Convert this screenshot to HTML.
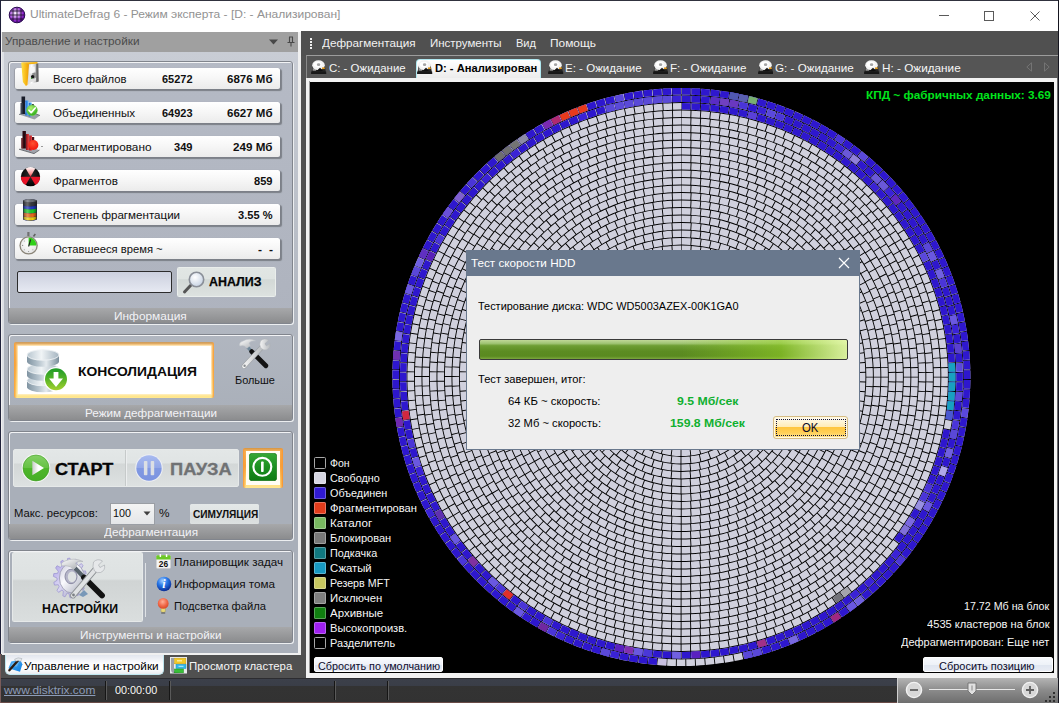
<!DOCTYPE html>
<html lang="ru"><head><meta charset="utf-8"><title>UltimateDefrag 6</title><style>
html,body{margin:0;padding:0;background:#000}
body{width:1059px;height:703px;overflow:hidden;font-family:"Liberation Sans", "DejaVu Sans", sans-serif}
#win{position:relative;width:1059px;height:703px;overflow:hidden;background:#505050}
.abs{position:absolute}
.t{position:absolute;white-space:nowrap;line-height:1;transform-origin:0 50%}
.grp{box-sizing:border-box;border:1px solid #81858d;border-radius:3px;box-shadow:inset 1px 1px 0 #f2f3f5, 1px 1px 0 #eceef0}
.gft{background:linear-gradient(#a7a8aa,#8b8c8e);border-radius:0 0 2px 2px}
.row{box-sizing:border-box;border-radius:2.5px;background:linear-gradient(#ffffff 0,#f7f7f7 45%,#ebebeb 100%);box-shadow:1.2px 1.5px 1px #7c8088, -0.8px 0 0.8px #9a9ea6}
</style></head><body>
<div id="win">
<div class="abs" style="left:0px;top:0px;width:1059px;height:32px;background:#fff"></div>
<div class="abs" style="left:0px;top:0px;width:1059px;height:1px;background:#30323e"></div>
<svg class="abs" style="left:8px;top:5.7px" width="18" height="18" viewBox="0 0 18 18"><defs><radialGradient id="gi" cx="42%" cy="40%" r="68%"><stop offset="0" stop-color="#ffffff"/><stop offset="0.35" stop-color="#c890e8"/><stop offset="0.7" stop-color="#8a20c8"/><stop offset="1" stop-color="#3a0a70"/></radialGradient></defs><circle cx="9" cy="9" r="7.8" fill="url(#gi)"/><g stroke="#1a0a28" stroke-width="0.9" fill="none" opacity="0.9"><path d="M1.5 9h15M2.8 5h12.4M2.8 13h12.4M9 1.5v15M5 2.8v12.4M13 2.8v12.4"/></g><circle cx="9" cy="9" r="7.8" fill="none" stroke="#2a0a50" stroke-width="1"/></svg>
<span class="t" style="left:30.1px;top:9.1px;font-size:11.8px;color:#929292;transform:scaleX(1.0177)">UltimateDefrag 6 - Режим эксперта - [D: - Анализирован]</span>
<div class="abs" style="left:939px;top:15px;width:10px;height:1px;background:#5a5a5a"></div>
<div class="abs" style="left:984px;top:11px;width:8px;height:8px;border:1px solid #5a5a5a"></div>
<svg class="abs" style="left:1029.5px;top:10.5px" width="10" height="10" viewBox="0 0 10 10"><path d="M0.5 0.5L9.5 9.5M9.5 0.5L0.5 9.5" stroke="#5a5a5a" stroke-width="1" fill="none"/></svg>
<div class="abs" style="left:0px;top:32px;width:310px;height:671px;background:#505050"></div>
<div class="abs" style="left:0px;top:0px;width:1px;height:703px;background:#20223a"></div>
<div class="abs" style="left:1px;top:32px;width:1px;height:622px;background:#f0f0f0"></div>
<div class="abs" style="left:2px;top:32px;width:296px;height:20px;background:#a0a0a0"></div>
<span class="t" style="left:4.5px;top:35.9px;font-size:10.9px;color:#4c4c4c;transform:scaleX(1.0826)">Управление и настройки</span>
<svg class="abs" style="left:268px;top:38px" width="12" height="8" viewBox="0 0 12 8"><path d="M1 1.5h9L5.5 6.5z" fill="#484848"/></svg>
<svg class="abs" style="left:286px;top:36px" width="10" height="11" viewBox="0 0 10 11"><path d="M3 1h4M3.5 1v5M6.5 1v5M1.5 6.5h7M5 6.5v4" stroke="#484848" stroke-width="1.1" fill="none"/></svg>
<div class="abs" style="left:2px;top:52px;width:296px;height:601px;background:linear-gradient(#c9cdd5 0,#a9afb9 368px,#a9afb9 100%)"></div>
<div class="abs" style="left:2px;top:52px;width:2px;height:601px;background:#dde0e5"></div>
<div class="abs" style="left:2px;top:653px;width:299px;height:1.5px;background:#f0f0f0"></div>
<div class="abs" style="left:298px;top:32px;width:3px;height:622px;background:#f0f0f0"></div>
<div class="abs" style="left:301px;top:32px;width:4px;height:645px;background:#525252"></div>
<div class="abs grp" style="left:8px;top:61px;width:285px;height:263px;background:linear-gradient(#b5bac5,#aeb3be)"></div>
<div class="abs gft" style="left:9px;top:308px;width:283px;height:15px"></div>
<span class="t" style="left:113.7px;top:310.9px;font-size:10.9px;color:#f2f2f6;transform:scaleX(1.0917)">Информация</span>
<div class="abs row" style="left:14.5px;top:68px;width:265.8px;height:21.3px"></div>
<span class="t" style="left:52.9px;top:73.9px;font-size:10.9px;color:#101010;transform:scaleX(1.0364)">Всего файлов</span>
<span class="t" style="left:161.5px;top:73.9px;font-size:10.9px;color:#101010;font-weight:700;transform:scaleX(1.0067)">65272</span>
<span class="t" style="left:226.5px;top:73.9px;font-size:10.9px;color:#101010;font-weight:700;transform:scaleX(1.0566)">6876 Мб</span>
<div class="abs row" style="left:14.5px;top:102px;width:265.8px;height:21.3px"></div>
<span class="t" style="left:52.9px;top:107.9px;font-size:10.9px;color:#101010;transform:scaleX(1.0691)">Объединенных</span>
<span class="t" style="left:161.5px;top:107.9px;font-size:10.9px;color:#101010;font-weight:700;transform:scaleX(1.0067)">64923</span>
<span class="t" style="left:226.5px;top:107.9px;font-size:10.9px;color:#101010;font-weight:700;transform:scaleX(1.0566)">6627 Мб</span>
<div class="abs row" style="left:14.5px;top:136px;width:265.8px;height:21.3px"></div>
<span class="t" style="left:52.5px;top:141.9px;font-size:10.9px;color:#101010;transform:scaleX(1.0835)">Фрагментировано</span>
<span class="t" style="left:173.5px;top:141.9px;font-size:10.9px;color:#101010;font-weight:700;transform:scaleX(1.0181)">349</span>
<span class="t" style="left:232.5px;top:141.9px;font-size:10.9px;color:#101010;font-weight:700;transform:scaleX(1.0676)">249 Мб</span>
<div class="abs row" style="left:14.5px;top:170px;width:265.8px;height:21.3px"></div>
<span class="t" style="left:52.5px;top:175.9px;font-size:10.9px;color:#101010;transform:scaleX(1.0719)">Фрагментов</span>
<span class="t" style="left:253.5px;top:175.9px;font-size:10.9px;color:#101010;font-weight:700;transform:scaleX(1.0181)">859</span>
<div class="abs row" style="left:14.5px;top:204px;width:265.8px;height:21.3px"></div>
<span class="t" style="left:52.9px;top:209.9px;font-size:10.9px;color:#101010;transform:scaleX(1.0646)">Степень фрагментации</span>
<span class="t" style="left:237.5px;top:209.9px;font-size:10.9px;color:#101010;font-weight:700;transform:scaleX(1.0175)">3.55 %</span>
<div class="abs row" style="left:14.5px;top:238px;width:265.8px;height:21.3px"></div>
<span class="t" style="left:52.9px;top:243.9px;font-size:10.9px;color:#101010;transform:scaleX(1.0290)">Оставшееся время ~</span>
<span class="t" style="left:257.8px;top:243.9px;font-size:10.9px;color:#101010;font-weight:700;word-spacing:3.2px;transform:scaleX(1.1050)">- -</span>
<svg class="abs" style="left:20px;top:61px" width="20" height="26" viewBox="0 0 20 26">
<defs><linearGradient id="fy" x1="0" y1="0" x2="1" y2="0"><stop offset="0" stop-color="#ffe24a"/><stop offset="0.6" stop-color="#f8b818"/><stop offset="1" stop-color="#e89808"/></linearGradient>
<linearGradient id="fp" x1="0" y1="0" x2="1" y2="0"><stop offset="0" stop-color="#d8d8d8"/><stop offset="0.35" stop-color="#ffffff"/><stop offset="0.7" stop-color="#c4c4c4"/><stop offset="0.82" stop-color="#5a5a5a"/><stop offset="1" stop-color="#8a8a8a"/></linearGradient></defs>
<path d="M1.2 1.5L17.4 1.1L17.6 2.8L9 3.4z" fill="#f4b414"/>
<path d="M8.2 3.4L18.4 2.4L18.9 20.4L7.9 23.6z" fill="url(#fp)"/>
<path d="M9.6 6.5L14.6 5.6L15 10.5L9.8 12z" fill="#f6f6f6"/>
<path d="M9.5 13L15.8 11.2L16 19.5L9.2 21.8z" fill="#e0e0e0"/>
<path d="M12 12.5L15.8 11.3L15.9 16.5L13.5 18z" fill="#8c8c8c"/>
<circle cx="12.6" cy="15.8" r="1.7" fill="#141414"/>
<circle cx="11.6" cy="17.3" r="0.7" fill="#38a028"/>
<path d="M1.2 1.5L9 3.2L7.5 24L5.9 25L2.9 21z" fill="url(#fy)"/>
</svg><svg class="abs" style="left:18px;top:95px" width="24" height="26" viewBox="0 0 24 26">
<defs><linearGradient id="cb" x1="0" y1="0" x2="1" y2="0"><stop offset="0" stop-color="#1060d0"/><stop offset="1" stop-color="#60b8f8"/></linearGradient>
<radialGradient id="cg" cx="40%" cy="30%" r="70%"><stop offset="0" stop-color="#b0f070"/><stop offset="1" stop-color="#2cae18"/></radialGradient></defs>
<path d="M1 19.5L13 17L22 20.5L16.5 24.5z" fill="#9aa0a8"/>
<path d="M1 19.5L13 17L22 20.5" fill="none" stroke="#606468" stroke-width="0.8"/>
<rect x="3.5" y="1.5" width="3.6" height="17.5" fill="#181c28"/>
<rect x="2.5" y="8" width="2" height="11" fill="#404858"/>
<rect x="7.3" y="5.5" width="3.2" height="15" fill="url(#cb)"/>
<rect x="10.7" y="7.5" width="3" height="14" fill="url(#cb)"/>
<rect x="13.8" y="9" width="2" height="6" fill="#282c38"/>
<circle cx="14" cy="15.3" r="5.4" fill="url(#cg)" stroke="#7ad050" stroke-width="0.5"/>
<path d="M11 15.2l2.2 2.4l4-4.6" fill="none" stroke="#fff" stroke-width="1.7" stroke-linecap="round" stroke-linejoin="round"/>
</svg><svg class="abs" style="left:18px;top:129px" width="26" height="26" viewBox="0 0 26 26">
<defs><linearGradient id="cr" x1="0" y1="0" x2="1" y2="0"><stop offset="0" stop-color="#901018"/><stop offset="1" stop-color="#f04848"/></linearGradient>
<radialGradient id="rr" cx="45%" cy="35%" r="70%"><stop offset="0" stop-color="#ff5030"/><stop offset="1" stop-color="#f01008"/></radialGradient></defs>
<path d="M1 20L12 18L21 21L16 24.5z" fill="#a0a4ac"/>
<path d="M1 20.2L16 24.6L21.5 21" fill="none" stroke="#505458" stroke-width="0.8"/>
<rect x="4.5" y="2" width="3.4" height="17.5" fill="#280810"/>
<rect x="3.2" y="9" width="2" height="10.5" fill="#68262c"/>
<rect x="8" y="5" width="3" height="16" fill="url(#cr)"/>
<rect x="11.2" y="6.5" width="2.8" height="15" fill="url(#cr)"/>
<rect x="14" y="8" width="2.2" height="5" fill="#481018"/>
<circle cx="15.3" cy="16" r="5.1" fill="url(#rr)"/>
<circle cx="24" cy="17.5" r="0.6" fill="#303030"/>
</svg><svg class="abs" style="left:20px;top:166px" width="21" height="21" viewBox="0 0 21 21">
<defs><linearGradient id="rt" x1="0" y1="0" x2="0" y2="1"><stop offset="0" stop-color="#ffffff"/><stop offset="0.7" stop-color="#ff9090"/><stop offset="1" stop-color="#f02030"/></linearGradient>
<radialGradient id="rk" cx="50%" cy="40%" r="60%"><stop offset="0" stop-color="#303030"/><stop offset="1" stop-color="#000"/></radialGradient></defs>
<circle cx="10.5" cy="10.7" r="9.6" fill="url(#rk)"/>
<path d="M10.5 10.7L15.30 2.39A9.6 9.6 0 0 0 5.70 2.39z" fill="url(#rt)"/>
<path d="M10.5 10.7L0.90 10.70A9.6 9.6 0 0 0 5.70 19.01z" fill="#e81428"/>
<path d="M10.5 10.7L15.30 19.01A9.6 9.6 0 0 0 20.10 10.70z" fill="#e81428"/>
</svg><svg class="abs" style="left:22px;top:198px" width="16" height="24" viewBox="0 0 16 24">
<defs><linearGradient id="bs" x1="0" y1="0" x2="1" y2="0"><stop offset="0" stop-color="#000" stop-opacity="0.45"/><stop offset="0.35" stop-color="#fff" stop-opacity="0.25"/><stop offset="0.7" stop-color="#000" stop-opacity="0"/><stop offset="1" stop-color="#000" stop-opacity="0.5"/></linearGradient></defs>
<path d="M1 2.5Q8 -0.5 15 2.5V21.5Q8 24.5 1 21.5z" fill="#1c2a80"/>
<path d="M1 2.5Q8 -0.5 15 2.5V7.5Q8 9.5 1 7.5z" fill="#34363c"/>
<ellipse cx="8" cy="2.6" rx="7" ry="1.7" fill="#6c7078"/>
<path d="M1.5 7.8Q8 9.8 14.5 7.8V10.5Q8 12 1.5 10.5z" fill="#2038c0"/>
<path d="M1.5 10.6Q8 12.4 14.5 10.6V14.6Q8 16.2 1.5 14.6z" fill="#18c828"/>
<path d="M1.5 14.8Q8 16.4 14.5 14.8V18.3Q8 20 1.5 18.3z" fill="#e86a18"/>
<path d="M1.5 18.5Q8 20.2 14.5 18.5V21.3Q8 23.8 1.5 21.3z" fill="#f0d010"/>
<path d="M1 2.5Q8 -0.5 15 2.5V21.5Q8 24.5 1 21.5z" fill="url(#bs)"/>
</svg><svg class="abs" style="left:18px;top:231px" width="22" height="25" viewBox="0 0 22 25">
<defs><radialGradient id="wf" cx="45%" cy="40%" r="60%"><stop offset="0" stop-color="#fff"/><stop offset="1" stop-color="#e6e6e6"/></radialGradient></defs>
<rect x="9.3" y="1" width="2.2" height="4" fill="#707070"/>
<path d="M15.5 5.5l1.8-2.5" stroke="#606060" stroke-width="1.6"/>
<circle cx="10.6" cy="14.4" r="9.2" fill="#8a8478"/>
<circle cx="10.6" cy="14.4" r="7.9" fill="url(#wf)"/>
<path d="M10.6 14.4V6.5A7.9 7.9 0 0 1 18.5 14.4z" fill="#30d018"/>
<path d="M10.6 15.5L12.6 8.5" stroke="#202020" stroke-width="1.1"/>
<g fill="#909090"><circle cx="10.6" cy="20.5" r="0.6"/><circle cx="4.6" cy="14.4" r="0.6"/><circle cx="6.3" cy="10" r="0.5"/><circle cx="6.3" cy="18.7" r="0.5"/><circle cx="14.9" cy="18.7" r="0.5"/></g>
</svg>
<div class="abs" style="left:17px;top:271px;width:155px;height:22px;box-sizing:border-box;border:1px solid #2c2c2c;border-radius:2px;background:linear-gradient(#ccd0de,#e6e9f2)"></div>
<div class="abs" style="left:176.7px;top:266.7px;width:99.6px;height:30.2px;box-sizing:border-box;border:1px solid #eaeeec;border-radius:1.5px;background:linear-gradient(#e1e6e4 0,#dfe4e2 38%,#d2d8d6 42%,#dde2e0 100%)"></div>
<span class="t" style="left:209.1px;top:275.1px;font-size:13px;color:#050505;font-weight:700;-webkit-text-stroke:0.25px #050505;transform:scaleX(0.9538)">АНАЛИЗ</span>
<svg class="abs" style="left:182px;top:269px" width="26" height="26" viewBox="0 0 26 26"><defs><radialGradient id="gl" cx="40%" cy="35%" r="65%"><stop offset="0" stop-color="#fff"/><stop offset="1" stop-color="#c8d4e4"/></radialGradient></defs><path d="M9.5 15.5L2.5 23" stroke="#555" stroke-width="3" stroke-linecap="round"/><circle cx="14.5" cy="10.5" r="7.2" fill="url(#gl)" stroke="#8a8f98" stroke-width="1.6"/></svg>
<div class="abs grp" style="left:8px;top:334px;width:285px;height:87px;background:transparent"></div>
<div class="abs gft" style="left:9px;top:405px;width:283px;height:15px"></div>
<span class="t" style="left:84.5px;top:407.9px;font-size:10.9px;color:#f2f2f6;transform:scaleX(1.0736)">Режим дефрагментации</span>
<div class="abs" style="left:14px;top:342px;width:200px;height:56px;border-radius:2px;background:linear-gradient(90deg,#f8a038 0,rgba(248,160,56,0) 3px,rgba(248,160,56,0) 197px,#f8a038 200px),linear-gradient(#c8985c 0,#f4b868 3px,#f8a840 22px,#ffd060 40px,#ffe890 56px)"></div>
<div class="abs" style="left:17.5px;top:345.5px;width:193px;height:48.5px;background:#fff;box-shadow:0 0 1.5px 1px #fff1cc"></div>
<span class="t" style="left:78.1px;top:364.7px;font-size:13.5px;color:#0a0a0a;font-weight:700;transform:scaleX(1.0268)">КОНСОЛИДАЦИЯ</span>
<svg class="abs" style="left:26px;top:347px" width="46" height="46" viewBox="0 0 46 46">
<defs><linearGradient id="dbs" x1="0" y1="0" x2="1" y2="0"><stop offset="0" stop-color="#8094a2"/><stop offset="0.35" stop-color="#b4c2cc"/><stop offset="0.6" stop-color="#e4eaee"/><stop offset="1" stop-color="#7a8e9c"/></linearGradient>
<linearGradient id="dbt" x1="0" y1="0" x2="1" y2="0"><stop offset="0" stop-color="#b8c6d0"/><stop offset="0.45" stop-color="#f0f4f6"/><stop offset="1" stop-color="#a4b4c0"/></linearGradient>
<linearGradient id="dbg" x1="0" y1="0" x2="0" y2="1"><stop offset="0" stop-color="#1c9a28"/><stop offset="0.5" stop-color="#58b428"/><stop offset="1" stop-color="#a4d030"/></linearGradient></defs>
<ellipse cx="17" cy="39.5" rx="16" ry="5" fill="#6c808e"/>
<path d="M1 33.5v6.5a16 5.2 0 0 0 32 0v-6.5z" fill="url(#dbs)"/><ellipse cx="17" cy="33.5" rx="16" ry="5.2" fill="url(#dbt)" stroke="#eef2f4" stroke-width="0.9"/><path d="M1 22v6.5a16 5.2 0 0 0 32 0v-6.5z" fill="url(#dbs)"/><ellipse cx="17" cy="22" rx="16" ry="5.2" fill="url(#dbt)" stroke="#eef2f4" stroke-width="0.9"/><path d="M1 8v6.5a16 5.2 0 0 0 32 0v-6.5z" fill="url(#dbs)"/><ellipse cx="17" cy="8" rx="16" ry="5.2" fill="url(#dbt)" stroke="#eef2f4" stroke-width="0.9"/>
<circle cx="30" cy="32.3" r="12.2" fill="#fff"/>
<circle cx="30" cy="32.3" r="11" fill="url(#dbg)"/>
<path d="M27.6 25h4.8v6.5h4.6L30 40L23 31.5h4.6z" fill="#fff"/>
</svg>
<svg class="abs" style="left:238px;top:337px" width="34" height="33" viewBox="0 0 36 33">
<defs><linearGradient id="tha" x1="0" y1="0" x2="1" y2="1"><stop offset="0" stop-color="#ffffff"/><stop offset="1" stop-color="#a8acb0"/></linearGradient>
<linearGradient id="twa" x1="0" y1="0" x2="1" y2="0"><stop offset="0" stop-color="#f4f4f4"/><stop offset="1" stop-color="#b4b8bc"/></linearGradient></defs>
<path d="M10 9.5L14.5 14.5" stroke="#6e8698" stroke-width="3.4"/>
<path d="M14.5 14.5L29.5 29.5" stroke="#141414" stroke-width="5" stroke-linecap="round"/>
<path d="M2 8.5Q0.5 5 5 3.5Q12 -0.5 18.5 3Q14 2.5 11.5 5.5L13 8L9.5 11L7 8.5Q4.5 7.5 2 8.5z" fill="url(#tha)" stroke="#c4c8cc" stroke-width="0.5"/>
<path d="M6.5 30L27 8" stroke="#9ea2a6" stroke-width="5.2" stroke-linecap="round"/>
<path d="M6.5 30L27 8" stroke="url(#twa)" stroke-width="4" stroke-linecap="round"/>
<path d="M24 3Q28 -0.5 32.5 2.5L28.5 6L30 8.5L34 6Q35 10.5 30.5 12.5Q27 13.5 24.5 11Q22 7 24 3z" fill="url(#twa)" stroke="#aeb2b6" stroke-width="0.5"/>
<circle cx="7" cy="29.5" r="1.3" fill="#8a8e92"/>
</svg>
<span class="t" style="left:235.2px;top:374.9px;font-size:10.9px;color:#101010;transform:scaleX(1.0026)">Больше</span>
<div class="abs grp" style="left:8px;top:431px;width:285px;height:109px;background:transparent"></div>
<div class="abs gft" style="left:9px;top:524px;width:283px;height:15px"></div>
<span class="t" style="left:103.5px;top:526.9px;font-size:10.9px;color:#f2f2f6;transform:scaleX(1.0781)">Дефрагментация</span>
<div class="abs" style="left:13px;top:449px;width:225.8px;height:38px;box-sizing:border-box;border:1px solid #e6e9e9;border-radius:2px;background:linear-gradient(#e3e7e7 0,#e0e4e4 36%,#d3d7d7 39%,#dde1e1 100%)"></div>
<div class="abs" style="left:125.5px;top:450px;width:1px;height:36px;background:#eceeef"></div>
<div class="abs" style="left:124.5px;top:450px;width:1px;height:36px;background:#c6caca"></div>
<svg class="abs" style="left:21.1px;top:453.1px" width="30" height="30" viewBox="0 0 30 30"><defs><linearGradient id="gs" x1="0" y1="0" x2="0" y2="1"><stop offset="0" stop-color="#84d066"/><stop offset="0.48" stop-color="#66c244"/><stop offset="0.52" stop-color="#4eb62a"/><stop offset="1" stop-color="#46ae26"/></linearGradient><linearGradient id="gt" x1="0" y1="0" x2="1" y2="0"><stop offset="0" stop-color="#c8ccc8"/><stop offset="0.5" stop-color="#ffffff"/><stop offset="1" stop-color="#ffffff"/></linearGradient></defs><circle cx="15" cy="15" r="14.3" fill="#f6f8f6"/><circle cx="15" cy="15" r="13" fill="url(#gs)" stroke="#3c9c20" stroke-width="0.6"/><path d="M11.3 7.8L23 15L11.3 22.2z" fill="url(#gt)"/></svg>
<span class="t" style="left:55.4px;top:460.5px;font-size:17.2px;color:#050505;font-weight:700;-webkit-text-stroke:0.35px #050505;transform:scaleX(1.0511)">СТАРТ</span>
<svg class="abs" style="left:133.9px;top:452.5px" width="30" height="30" viewBox="0 0 30 30"><defs><linearGradient id="gp" x1="0" y1="0" x2="0" y2="1"><stop offset="0" stop-color="#a8baf0"/><stop offset="0.48" stop-color="#94a8e8"/><stop offset="0.52" stop-color="#8098e2"/><stop offset="1" stop-color="#7c94e0"/></linearGradient></defs><circle cx="15" cy="15" r="13.8" fill="#eceef2"/><circle cx="15" cy="15" r="12.7" fill="url(#gp)"/><rect x="9.9" y="7.9" width="3.5" height="14.4" rx="0.8" fill="#dcdfe4"/><rect x="16.7" y="7.9" width="3.5" height="14.4" rx="0.8" fill="#dcdfe4"/></svg>
<span class="t" style="left:169.5px;top:460.5px;font-size:17.2px;color:#707274;font-weight:700;-webkit-text-stroke:0.3px #707274;transform:scaleX(1.0641)">ПАУЗА</span>
<div class="abs" style="left:243.2px;top:448.2px;width:39.5px;height:40px;border-radius:2px;background:linear-gradient(90deg,#f89a34 0,rgba(248,154,52,0) 3px,rgba(248,154,52,0) 36.5px,#f89a34 39.5px),linear-gradient(#d49444 0,#f6b45c 3px,#f8a43c 18px,#ffd470 30px,#ffe690 40px)"></div>
<div class="abs" style="left:246.4px;top:451px;width:33.4px;height:33.6px;background:#fffdf4"></div>
<svg class="abs" style="left:248.6px;top:453.4px" width="28" height="28" viewBox="0 0 30 30"><defs><linearGradient id="gw" x1="0" y1="0" x2="0" y2="1"><stop offset="0" stop-color="#36a836"/><stop offset="0.5" stop-color="#1c9020"/><stop offset="1" stop-color="#0e7a12"/></linearGradient></defs><rect x="0.3" y="0.3" width="29.4" height="29.4" rx="3" fill="url(#gw)" stroke="#0c6a10" stroke-width="0.6"/><circle cx="14.3" cy="14.8" r="9.6" fill="none" stroke="#fff" stroke-width="2.3"/><rect x="12.9" y="9" width="2.8" height="11.4" rx="0.8" fill="#fff"/></svg>
<span class="t" style="left:14.1px;top:507.9px;font-size:10.9px;color:#101010;transform:scaleX(1.0356)">Макс. ресурсов:</span>
<div class="abs" style="left:110px;top:503px;width:45px;height:22px;box-sizing:border-box;border:1px solid #9a9ea4;background:linear-gradient(#f4f4f4,#e4e6e8)"></div>
<span class="t" style="left:112.5px;top:507.9px;font-size:10.9px;color:#101010;transform:scaleX(0.9905)">100</span>
<svg class="abs" style="left:143px;top:511px" width="8" height="5" viewBox="0 0 8 5"><path d="M0.5 0.5h7L4 4.5z" fill="#404040"/></svg>
<span class="t" style="left:159.0px;top:507.9px;font-size:10.9px;color:#101010;transform:scaleX(1.0839)">%</span>
<div class="abs" style="left:189.8px;top:504px;width:69.3px;height:20px;border-radius:1.5px;background:linear-gradient(#e4e8e8 0,#e0e4e4 40%,#d4d8d8 44%,#dde1e1 100%)"></div>
<span class="t" style="left:192.8px;top:509.1px;font-size:10.6px;color:#101010;font-weight:700;transform:scaleX(0.9561)">СИМУЛЯЦИЯ</span>
<div class="abs grp" style="left:8px;top:550px;width:285px;height:93px;background:transparent"></div>
<div class="abs gft" style="left:9px;top:627px;width:283px;height:15px"></div>
<span class="t" style="left:79.5px;top:629.9px;font-size:10.9px;color:#f2f2f6;transform:scaleX(1.0753)">Инструменты и настройки</span>
<div class="abs" style="left:12.3px;top:552px;width:130.6px;height:70px;box-sizing:border-box;border:1px solid #e6e9e9;border-radius:1.5px;background:linear-gradient(#e1e5e5 0,#dee2e2 38%,#d0d4d4 41%,#dadede 100%)"></div>
<svg class="abs" style="left:52px;top:556px" width="56" height="44" viewBox="0 0 56 44">
<defs><linearGradient id="gg" x1="0" y1="0" x2="1" y2="1"><stop offset="0" stop-color="#a89ce4"/><stop offset="0.45" stop-color="#dcd8f4"/><stop offset="1" stop-color="#9a9eb0"/></linearGradient>
<linearGradient id="gb" x1="0" y1="0" x2="1" y2="1"><stop offset="0" stop-color="#c8c8d8"/><stop offset="0.4" stop-color="#fafafe"/><stop offset="1" stop-color="#a4a8b8"/></linearGradient>
<linearGradient id="gh" x1="0" y1="0" x2="1" y2="1"><stop offset="0" stop-color="#ffffff"/><stop offset="1" stop-color="#a0a4a8"/></linearGradient></defs>
<path d="M31.0 22.0L34.6 23.6L34.2 26.4L30.4 26.7L29.7 28.7L32.4 32.0L31.0 34.3L27.5 32.6L26.1 34.1L27.3 38.4L25.2 39.8L22.7 36.5L20.9 37.1L20.4 41.6L18.0 41.8L16.9 37.4L15.1 37.1L13.0 40.9L10.8 39.8L11.4 35.4L9.9 34.1L6.6 36.4L5.0 34.3L7.2 30.7L6.3 28.7L2.5 29.1L1.8 26.4L5.1 24.2L5.0 22.0L1.4 20.4L1.8 17.6L5.6 17.3L6.3 15.3L3.6 12.0L5.0 9.7L8.5 11.4L9.9 9.9L8.7 5.6L10.8 4.2L13.3 7.5L15.1 6.9L15.6 2.4L18.0 2.2L19.1 6.6L20.9 6.9L23.0 3.1L25.2 4.2L24.6 8.6L26.1 9.9L29.4 7.6L31.0 9.7L28.8 13.3L29.7 15.3L33.5 14.9L34.2 17.6L30.9 19.8z" fill="url(#gg)" stroke="#9890d0" stroke-width="0.7"/>
<ellipse cx="20" cy="22" rx="12.6" ry="15" fill="url(#gb)" stroke="#a0a0b8" stroke-width="0.9"/>
<ellipse cx="19" cy="20.5" rx="6" ry="7.2" fill="#b4b4c8" stroke="#8c8ca4" stroke-width="1"/>
<ellipse cx="20" cy="20.8" rx="4.2" ry="5.4" fill="#dfe2e3"/>
<path d="M32 34L36 38L31 41L27 39z" fill="#7898b8"/>
<path d="M23 12L32 21.5" stroke="#58636c" stroke-width="4"/>
<path d="M32 21.5L50 39.5" stroke="#121212" stroke-width="5.8" stroke-linecap="round"/>
<path d="M10 10Q8 7 13 5Q22 1 31 5.5Q26 4.5 23.5 7L25 10L21 13.5L18.5 10.8Q14 9 10 10z" fill="url(#gh)" stroke="#b0b4b8" stroke-width="0.6"/>
<path d="M21 39.5L44.5 12" stroke="#8e9296" stroke-width="5.8" stroke-linecap="round"/>
<path d="M21 39.5L44.5 12" stroke="#e0e2e4" stroke-width="4.2" stroke-linecap="round"/>
<path d="M41.5 6Q45.5 2 50.5 5L46.5 9L48 11.5L52.5 9Q53.5 14.5 48.5 16.5Q45 17.5 42.5 15Q40 10.5 41.5 6z" fill="#e6e8ea" stroke="#a4a8ac" stroke-width="0.6"/>
<circle cx="21.5" cy="39" r="1.4" fill="#7c8084"/>
</svg>
<span class="t" style="left:41.5px;top:602.9px;font-size:12px;color:#0a0a0a;font-weight:700;transform:scaleX(1.0230)">НАСТРОЙКИ</span>
<div class="abs" style="left:145px;top:563px;width:1px;height:54px;background:#dfe2e6"></div>
<span class="t" style="left:173.9px;top:556.9px;font-size:10.9px;color:#101010;transform:scaleX(1.0699)">Планировщик задач</span>
<span class="t" style="left:173.9px;top:578.9px;font-size:10.9px;color:#101010;transform:scaleX(1.0736)">Информация тома</span>
<span class="t" style="left:173.9px;top:600.9px;font-size:10.9px;color:#101010;transform:scaleX(1.0303)">Подсветка файла</span>
<svg class="abs" style="left:156px;top:554px" width="15" height="15" viewBox="0 0 15 15">
<rect x="0.3" y="1.2" width="14.4" height="13.2" rx="1.2" fill="#f4f4f4" stroke="#c4c4c4" stroke-width="0.6"/>
<path d="M0.3 2.4Q0.3 1.2 1.5 1.2H13.5Q14.7 1.2 14.7 2.4V5.6H0.3z" fill="#6cc828"/>
<rect x="3.6" y="0" width="1.5" height="3" rx="0.6" fill="#fff"/><rect x="9.8" y="0" width="1.5" height="3" rx="0.6" fill="#fff"/>
<text x="7.5" y="13" font-family="Liberation Sans, sans-serif" font-size="8.4" font-weight="700" text-anchor="middle" fill="#101010">26</text>
</svg><svg class="abs" style="left:156px;top:576px" width="16" height="16" viewBox="0 0 16 16">
<defs><radialGradient id="ib" cx="40%" cy="28%" r="75%"><stop offset="0" stop-color="#a8d0ff"/><stop offset="0.45" stop-color="#2878e8"/><stop offset="1" stop-color="#082890"/></radialGradient></defs>
<circle cx="8" cy="8" r="7.3" fill="url(#ib)"/>
<text x="8" y="12.3" font-family="Liberation Serif, serif" font-size="12" font-weight="700" font-style="italic" text-anchor="middle" fill="#fff">i</text>
</svg><svg class="abs" style="left:156px;top:597px" width="14" height="18" viewBox="0 0 14 18">
<defs><radialGradient id="bb" cx="45%" cy="35%" r="65%"><stop offset="0" stop-color="#ffb098"/><stop offset="0.6" stop-color="#f06848"/><stop offset="1" stop-color="#d84828"/></radialGradient></defs>
<path d="M5 10.5h4.4v4.2q-2.2 1.6-4.4 0z" fill="#e8d878" stroke="#a09860" stroke-width="0.5"/>
<circle cx="7.2" cy="6.4" r="5.4" fill="url(#bb)"/>
<path d="M5.2 16h4" stroke="#606060" stroke-width="1.2"/>
</svg>
<div class="abs" style="left:1px;top:654.5px;width:305px;height:23px;background:#505050"></div>
<div class="abs" style="left:4.5px;top:654.5px;width:159px;height:20.5px;box-sizing:border-box;border:1px solid #bfe6ee;border-top:none;border-radius:0 0 5px 5px;background:linear-gradient(#e2e6ee 0,#fdfdfe 45%,#ffffff 70%,#e8ecf0 100%)"></div>
<span class="t" style="left:24.1px;top:660.9px;font-size:10.9px;color:#000;transform:scaleX(1.0842)">Управление и настройки</span>
<span class="t" style="left:188.5px;top:660.9px;font-size:10.9px;color:#f6f6f6;transform:scaleX(1.0482)">Просмотр кластера</span>
<svg class="abs" style="left:8px;top:657px" width="15" height="15" viewBox="0 0 15 15">
<defs><linearGradient id="tb1" x1="0" y1="0" x2="1" y2="1"><stop offset="0" stop-color="#58b4f8"/><stop offset="1" stop-color="#0c7ce0"/></linearGradient></defs>
<path d="M0.4 11.2L3.2 4.6L12.2 2.6L14.4 7.2L12 14.8z" fill="url(#tb1)"/>
<path d="M4 6L11.5 4.2L9 9.5L3 9.5z" fill="#8cd0fc" opacity="0.55"/>
<path d="M1.4 13.3L10 3.4" stroke="#2c1c14" stroke-width="2.3" stroke-linecap="round"/>
<path d="M6.6 2.2Q10 -0.2 14 1.6L12.6 4.6Q10.5 3 7.8 4.2z" fill="#e4e8ec" stroke="#9098a0" stroke-width="0.4"/>
</svg><svg class="abs" style="left:170px;top:657px" width="17" height="17" viewBox="0 0 17 17">
<rect x="0" y="0" width="17" height="16.5" fill="#e8eaec"/>
<path d="M1 1h3v13l6 2H3Q1 15 1 13z" fill="#9aa0a8"/>
<rect x="4.5" y="1.2" width="11.3" height="5.6" fill="#f0c828" stroke="#c8a010" stroke-width="0.5"/>
<rect x="7" y="3.2" width="5" height="1.2" fill="#fff4b0"/>
<rect x="6" y="7.3" width="10" height="4.2" fill="#30b8e8" stroke="#1890c0" stroke-width="0.5"/>
<rect x="8.5" y="8.8" width="5" height="1" fill="#c0ecff"/>
<rect x="4.5" y="12" width="9" height="3.8" fill="#38c038" stroke="#189018" stroke-width="0.5"/>
</svg>
<div class="abs" style="left:301px;top:31px;width:758px;height:24.5px;background:#505050"></div>
<div class="abs" style="left:309.5px;top:38px;width:2.5px;height:2px;background:#f0f0f0;box-shadow:0 3px 0 #f0f0f0,0 6px 0 #f0f0f0,0 9px 0 #f0f0f0"></div>
<span class="t" style="left:321.6px;top:37.9px;font-size:10.9px;color:#f2f2f2;transform:scaleX(1.0735)">Дефрагментация</span>
<span class="t" style="left:429.5px;top:37.9px;font-size:10.9px;color:#f2f2f2;transform:scaleX(1.0542)">Инструменты</span>
<span class="t" style="left:515.5px;top:37.9px;font-size:10.9px;color:#f2f2f2;transform:scaleX(1.0151)">Вид</span>
<span class="t" style="left:549.5px;top:37.9px;font-size:10.9px;color:#f2f2f2;transform:scaleX(1.0932)">Помощь</span>
<div class="abs" style="left:305.5px;top:55px;width:753.5px;height:23px;background:#555555;border-top:1px solid #9c9c9c;border-left:1px solid #8a8a8a;box-sizing:border-box"></div>
<div class="abs" style="left:415.5px;top:58.5px;width:125.5px;height:19.5px;box-sizing:border-box;border:1px solid #b0e8f0;border-bottom:none;border-radius:4px 4px 0 0;background:linear-gradient(#ffffff,#ececec)"></div>
<span class="t" style="left:329.2px;top:62.9px;font-size:10.9px;color:#f6f6f6;transform:scaleX(1.0509)">C: - Ожидание</span>
<svg class="abs" style="left:311.4px;top:59.6px" width="15.4" height="14.2" viewBox="0 0 15.4 14.2"><path d="M0.2 13.9L1.4 7Q2 1.6 7.6 1.2Q13.2 1.6 14 7L15.2 13.9z" fill="#242424"/><rect x="1.6" y="8.3" width="3.4" height="2.4" fill="#9c9c9c"/><ellipse cx="7.5" cy="5.3" rx="6.3" ry="5" fill="#f4f4f4"/><ellipse cx="6.8" cy="4.6" rx="4" ry="2.8" fill="#ffffff"/><ellipse cx="7.6" cy="4.7" rx="1.7" ry="1.4" fill="#a4a4a4"/><path d="M5.5 11L9 7.8L12 10.5L10 11.3z" fill="#111"/><rect x="11" y="7.4" width="2.8" height="1.7" fill="#e09a20"/><rect x="0.2" y="11.6" width="15" height="2.4" fill="#181818"/></svg>
<span class="t" style="left:434.5px;top:62.9px;font-size:10.9px;color:#000;font-weight:700;transform:scaleX(1.0241)">D: - Анализирован</span>
<svg class="abs" style="left:417.4px;top:59.6px" width="15.4" height="14.2" viewBox="0 0 15.4 14.2"><path d="M0.2 13.9L1.4 7Q2 1.6 7.6 1.2Q13.2 1.6 14 7L15.2 13.9z" fill="#242424"/><rect x="1.6" y="8.3" width="3.4" height="2.4" fill="#9c9c9c"/><ellipse cx="7.5" cy="5.3" rx="6.3" ry="5" fill="#f4f4f4"/><ellipse cx="6.8" cy="4.6" rx="4" ry="2.8" fill="#ffffff"/><ellipse cx="7.6" cy="4.7" rx="1.7" ry="1.4" fill="#a4a4a4"/><path d="M5.5 11L9 7.8L12 10.5L10 11.3z" fill="#111"/><rect x="11" y="7.4" width="2.8" height="1.7" fill="#e09a20"/><rect x="0.2" y="11.6" width="15" height="2.4" fill="#181818"/></svg>
<span class="t" style="left:564.5px;top:62.9px;font-size:10.9px;color:#f6f6f6;transform:scaleX(1.0598)">E: - Ожидание</span>
<svg class="abs" style="left:548.1999999999999px;top:59.6px" width="15.4" height="14.2" viewBox="0 0 15.4 14.2"><path d="M0.2 13.9L1.4 7Q2 1.6 7.6 1.2Q13.2 1.6 14 7L15.2 13.9z" fill="#242424"/><rect x="1.6" y="8.3" width="3.4" height="2.4" fill="#9c9c9c"/><ellipse cx="7.5" cy="5.3" rx="6.3" ry="5" fill="#f4f4f4"/><ellipse cx="6.8" cy="4.6" rx="4" ry="2.8" fill="#ffffff"/><ellipse cx="7.6" cy="4.7" rx="1.7" ry="1.4" fill="#a4a4a4"/><path d="M5.5 11L9 7.8L12 10.5L10 11.3z" fill="#111"/><rect x="11" y="7.4" width="2.8" height="1.7" fill="#e09a20"/><rect x="0.2" y="11.6" width="15" height="2.4" fill="#181818"/></svg>
<span class="t" style="left:669.8px;top:62.9px;font-size:10.9px;color:#f6f6f6;transform:scaleX(1.0646)">F: - Ожидание</span>
<svg class="abs" style="left:652.5px;top:59.6px" width="15.4" height="14.2" viewBox="0 0 15.4 14.2"><path d="M0.2 13.9L1.4 7Q2 1.6 7.6 1.2Q13.2 1.6 14 7L15.2 13.9z" fill="#242424"/><rect x="1.6" y="8.3" width="3.4" height="2.4" fill="#9c9c9c"/><ellipse cx="7.5" cy="5.3" rx="6.3" ry="5" fill="#f4f4f4"/><ellipse cx="6.8" cy="4.6" rx="4" ry="2.8" fill="#ffffff"/><ellipse cx="7.6" cy="4.7" rx="1.7" ry="1.4" fill="#a4a4a4"/><path d="M5.5 11L9 7.8L12 10.5L10 11.3z" fill="#111"/><rect x="11" y="7.4" width="2.8" height="1.7" fill="#e09a20"/><rect x="0.2" y="11.6" width="15" height="2.4" fill="#181818"/></svg>
<span class="t" style="left:774.8px;top:62.9px;font-size:10.9px;color:#f6f6f6;transform:scaleX(1.0694)">G: - Ожидание</span>
<svg class="abs" style="left:757.9px;top:59.6px" width="15.4" height="14.2" viewBox="0 0 15.4 14.2"><path d="M0.2 13.9L1.4 7Q2 1.6 7.6 1.2Q13.2 1.6 14 7L15.2 13.9z" fill="#242424"/><rect x="1.6" y="8.3" width="3.4" height="2.4" fill="#9c9c9c"/><ellipse cx="7.5" cy="5.3" rx="6.3" ry="5" fill="#f4f4f4"/><ellipse cx="6.8" cy="4.6" rx="4" ry="2.8" fill="#ffffff"/><ellipse cx="7.6" cy="4.7" rx="1.7" ry="1.4" fill="#a4a4a4"/><path d="M5.5 11L9 7.8L12 10.5L10 11.3z" fill="#111"/><rect x="11" y="7.4" width="2.8" height="1.7" fill="#e09a20"/><rect x="0.2" y="11.6" width="15" height="2.4" fill="#181818"/></svg>
<span class="t" style="left:881.5px;top:62.9px;font-size:10.9px;color:#f6f6f6;transform:scaleX(1.0783)">H: - Ожидание</span>
<svg class="abs" style="left:864.4px;top:59.6px" width="15.4" height="14.2" viewBox="0 0 15.4 14.2"><path d="M0.2 13.9L1.4 7Q2 1.6 7.6 1.2Q13.2 1.6 14 7L15.2 13.9z" fill="#242424"/><rect x="1.6" y="8.3" width="3.4" height="2.4" fill="#9c9c9c"/><ellipse cx="7.5" cy="5.3" rx="6.3" ry="5" fill="#f4f4f4"/><ellipse cx="6.8" cy="4.6" rx="4" ry="2.8" fill="#ffffff"/><ellipse cx="7.6" cy="4.7" rx="1.7" ry="1.4" fill="#a4a4a4"/><path d="M5.5 11L9 7.8L12 10.5L10 11.3z" fill="#111"/><rect x="11" y="7.4" width="2.8" height="1.7" fill="#e09a20"/><rect x="0.2" y="11.6" width="15" height="2.4" fill="#181818"/></svg>
<svg class="abs" style="left:1024.5px;top:61.5px" width="26" height="10" viewBox="0 0 26 10"><path d="M6.5 0.8L1.8 5L6.5 9.2zM19.5 0.8L24.2 5L19.5 9.2z" fill="none" stroke="#747474" stroke-width="1"/></svg>
<div class="abs" style="left:306px;top:78px;width:753px;height:600px;background:#f2f2f2"></div>
<div class="abs" style="left:1056.5px;top:78px;width:1.2px;height:600px;background:#686868"></div>
<div class="abs" style="left:310px;top:81.5px;width:743.5px;height:591px;background:#000"></div>
<div class="abs" style="left:308.5px;top:81px;width:1.5px;height:592px;background:#9a9a9a"></div>
<svg width="1059" height="703" viewBox="0 0 1059 703" style="position:absolute;left:0;top:0" shape-rendering="geometricPrecision">
<circle cx="681.4" cy="377.0" r="285.70" fill="none" stroke="#d0d0dd" stroke-width="6.60" stroke-dasharray="8.699 0.900" stroke-dashoffset="-0.450" transform="rotate(-90 681.4 377.0)"/>
<circle cx="681.4" cy="377.0" r="278.20" fill="none" stroke="#d0d0dd" stroke-width="6.60" stroke-dasharray="8.704 0.900" stroke-dashoffset="-0.450" transform="rotate(-90 681.4 377.0)"/>
<circle cx="681.4" cy="377.0" r="270.70" fill="none" stroke="#d0d0dd" stroke-width="6.60" stroke-dasharray="8.655 0.900" stroke-dashoffset="-0.450" transform="rotate(-90 681.4 377.0)"/>
<circle cx="681.4" cy="377.0" r="263.20" fill="none" stroke="#d0d0dd" stroke-width="6.60" stroke-dasharray="8.715 0.900" stroke-dashoffset="-0.450" transform="rotate(-90 681.4 377.0)"/>
<circle cx="681.4" cy="377.0" r="255.70" fill="none" stroke="#d0d0dd" stroke-width="6.60" stroke-dasharray="8.663 0.900" stroke-dashoffset="-0.450" transform="rotate(-90 681.4 377.0)"/>
<circle cx="681.4" cy="377.0" r="248.20" fill="none" stroke="#d0d0dd" stroke-width="6.60" stroke-dasharray="8.726 0.900" stroke-dashoffset="-0.450" transform="rotate(-90 681.4 377.0)"/>
<circle cx="681.4" cy="377.0" r="240.70" fill="none" stroke="#d0d0dd" stroke-width="6.60" stroke-dasharray="8.672 0.900" stroke-dashoffset="-0.450" transform="rotate(-90 681.4 377.0)"/>
<circle cx="681.4" cy="377.0" r="233.20" fill="none" stroke="#d0d0dd" stroke-width="6.60" stroke-dasharray="8.740 0.900" stroke-dashoffset="-0.450" transform="rotate(-90 681.4 377.0)"/>
<circle cx="681.4" cy="377.0" r="225.70" fill="none" stroke="#d0d0dd" stroke-width="6.60" stroke-dasharray="8.682 0.900" stroke-dashoffset="-0.450" transform="rotate(-90 681.4 377.0)"/>
<circle cx="681.4" cy="377.0" r="218.20" fill="none" stroke="#d0d0dd" stroke-width="6.60" stroke-dasharray="8.755 0.900" stroke-dashoffset="-0.450" transform="rotate(-90 681.4 377.0)"/>
<circle cx="681.4" cy="377.0" r="210.70" fill="none" stroke="#d0d0dd" stroke-width="6.60" stroke-dasharray="8.693 0.900" stroke-dashoffset="-0.450" transform="rotate(-90 681.4 377.0)"/>
<circle cx="681.4" cy="377.0" r="203.20" fill="none" stroke="#d0d0dd" stroke-width="6.60" stroke-dasharray="8.772 0.900" stroke-dashoffset="-0.450" transform="rotate(-90 681.4 377.0)"/>
<circle cx="681.4" cy="377.0" r="195.70" fill="none" stroke="#d0d0dd" stroke-width="6.60" stroke-dasharray="8.706 0.900" stroke-dashoffset="-0.450" transform="rotate(-90 681.4 377.0)"/>
<circle cx="681.4" cy="377.0" r="188.20" fill="none" stroke="#d0d0dd" stroke-width="6.60" stroke-dasharray="8.636 0.900" stroke-dashoffset="-0.450" transform="rotate(-90 681.4 377.0)"/>
<circle cx="681.4" cy="377.0" r="180.70" fill="none" stroke="#d0d0dd" stroke-width="6.60" stroke-dasharray="8.722 0.900" stroke-dashoffset="-0.450" transform="rotate(-90 681.4 377.0)"/>
<circle cx="681.4" cy="377.0" r="173.20" fill="none" stroke="#d0d0dd" stroke-width="6.60" stroke-dasharray="8.646 0.900" stroke-dashoffset="-0.450" transform="rotate(-90 681.4 377.0)"/>
<circle cx="681.4" cy="377.0" r="165.70" fill="none" stroke="#d0d0dd" stroke-width="6.60" stroke-dasharray="8.740 0.900" stroke-dashoffset="-0.450" transform="rotate(-90 681.4 377.0)"/>
<circle cx="681.4" cy="377.0" r="158.20" fill="none" stroke="#d0d0dd" stroke-width="6.60" stroke-dasharray="8.658 0.900" stroke-dashoffset="-0.450" transform="rotate(-90 681.4 377.0)"/>
<circle cx="681.4" cy="377.0" r="150.70" fill="none" stroke="#d0d0dd" stroke-width="6.60" stroke-dasharray="8.762 0.900" stroke-dashoffset="-0.450" transform="rotate(-90 681.4 377.0)"/>
<circle cx="681.4" cy="377.0" r="143.20" fill="none" stroke="#d0d0dd" stroke-width="6.60" stroke-dasharray="8.672 0.900" stroke-dashoffset="-0.450" transform="rotate(-90 681.4 377.0)"/>
<circle cx="681.4" cy="377.0" r="135.70" fill="none" stroke="#d0d0dd" stroke-width="6.60" stroke-dasharray="8.789 0.900" stroke-dashoffset="-0.450" transform="rotate(-90 681.4 377.0)"/>
<circle cx="681.4" cy="377.0" r="128.20" fill="none" stroke="#d0d0dd" stroke-width="6.60" stroke-dasharray="8.689 0.900" stroke-dashoffset="-0.450" transform="rotate(-90 681.4 377.0)"/>
<circle cx="681.4" cy="377.0" r="120.70" fill="none" stroke="#d0d0dd" stroke-width="6.60" stroke-dasharray="8.823 0.900" stroke-dashoffset="-0.450" transform="rotate(-90 681.4 377.0)"/>
<circle cx="681.4" cy="377.0" r="113.20" fill="none" stroke="#d0d0dd" stroke-width="6.60" stroke-dasharray="8.712 0.900" stroke-dashoffset="-0.450" transform="rotate(-90 681.4 377.0)"/>
<circle cx="681.4" cy="377.0" r="105.70" fill="none" stroke="#d0d0dd" stroke-width="6.60" stroke-dasharray="8.588 0.900" stroke-dashoffset="-0.450" transform="rotate(-90 681.4 377.0)"/>
<circle cx="681.4" cy="377.0" r="98.20" fill="none" stroke="#d0d0dd" stroke-width="6.60" stroke-dasharray="8.741 0.900" stroke-dashoffset="-0.450" transform="rotate(-90 681.4 377.0)"/>
<circle cx="681.4" cy="377.0" r="90.70" fill="none" stroke="#d0d0dd" stroke-width="6.60" stroke-dasharray="8.598 0.900" stroke-dashoffset="-0.450" transform="rotate(-90 681.4 377.0)"/>
<circle cx="681.4" cy="377.0" r="83.20" fill="none" stroke="#d0d0dd" stroke-width="6.60" stroke-dasharray="8.781 0.900" stroke-dashoffset="-0.450" transform="rotate(-90 681.4 377.0)"/>
<circle cx="681.4" cy="377.0" r="75.70" fill="none" stroke="#d0d0dd" stroke-width="6.60" stroke-dasharray="8.613 0.900" stroke-dashoffset="-0.450" transform="rotate(-90 681.4 377.0)"/>
<circle cx="681.4" cy="377.0" r="68.20" fill="none" stroke="#d0d0dd" stroke-width="6.60" stroke-dasharray="8.839 0.900" stroke-dashoffset="-0.450" transform="rotate(-90 681.4 377.0)"/>
<circle cx="681.4" cy="377.0" r="60.70" fill="none" stroke="#d0d0dd" stroke-width="6.60" stroke-dasharray="8.635 0.900" stroke-dashoffset="-0.450" transform="rotate(-90 681.4 377.0)"/>
<circle cx="681.4" cy="377.0" r="53.20" fill="none" stroke="#d0d0dd" stroke-width="6.60" stroke-dasharray="8.931 0.900" stroke-dashoffset="-0.450" transform="rotate(-90 681.4 377.0)"/>
<circle cx="681.4" cy="377.0" r="45.70" fill="none" stroke="#d0d0dd" stroke-width="6.60" stroke-dasharray="8.671 0.900" stroke-dashoffset="-0.450" transform="rotate(-90 681.4 377.0)"/>
<circle cx="681.4" cy="377.0" r="38.20" fill="none" stroke="#d0d0dd" stroke-width="6.60" stroke-dasharray="8.331 0.900" stroke-dashoffset="-0.450" transform="rotate(-90 681.4 377.0)"/>
<circle cx="681.4" cy="377.0" r="30.70" fill="none" stroke="#d0d0dd" stroke-width="6.60" stroke-dasharray="8.745 0.900" stroke-dashoffset="-0.450" transform="rotate(-90 681.4 377.0)"/>
<circle cx="681.4" cy="377.0" r="23.20" fill="none" stroke="#d0d0dd" stroke-width="6.60" stroke-dasharray="8.211 0.900" stroke-dashoffset="-0.450" transform="rotate(-90 681.4 377.0)"/>
<circle cx="681.4" cy="377.0" r="15.70" fill="none" stroke="#d0d0dd" stroke-width="6.60" stroke-dasharray="8.965 0.900" stroke-dashoffset="-0.450" transform="rotate(-90 681.4 377.0)"/>
<circle cx="681.4" cy="377.0" r="8.20" fill="none" stroke="#d0d0dd" stroke-width="6.60" stroke-dasharray="7.687 0.900" stroke-dashoffset="-0.450" transform="rotate(-90 681.4 377.0)"/>
<path d="M681.9 88.0L690.7 88.1L690.4 94.7L681.8 94.6z" fill="#2e17ce"/>
<path d="M691.6 88.2L700.4 88.6L699.9 95.2L691.3 94.8z" fill="#2e17ce"/>
<path d="M701.3 88.7L710.0 89.4L709.4 96.0L700.8 95.3z" fill="#2e17ce"/>
<path d="M710.9 89.5L719.7 90.5L718.8 97.1L710.3 96.1z" fill="#2e17ce"/>
<path d="M720.6 90.7L729.3 92.0L728.2 98.5L719.7 97.2z" fill="#2e17ce"/>
<path d="M730.2 92.1L738.8 93.8L737.5 100.2L729.1 98.7z" fill="#2e17ce"/>
<path d="M739.7 93.9L748.3 95.9L746.8 102.3L738.4 100.4z" fill="#2e17ce"/>
<path d="M749.2 96.1L757.7 98.3L756.0 104.6L747.6 102.5z" fill="#2e17ce"/>
<path d="M758.6 98.5L767.0 101.0L765.1 107.3L756.8 104.9z" fill="#2e17ce"/>
<path d="M767.9 101.2L776.3 104.0L774.1 110.2L765.9 107.5z" fill="#2e17ce"/>
<path d="M777.1 104.3L785.4 107.4L783.0 113.5L774.9 110.5z" fill="#2e17ce"/>
<path d="M786.2 107.7L794.4 111.0L791.8 117.1L783.8 113.8z" fill="#2e17ce"/>
<path d="M795.2 111.4L803.2 114.9L800.5 120.9L792.6 117.4z" fill="#2e17ce"/>
<path d="M804.1 115.3L812.0 119.2L809.0 125.1L801.3 121.3z" fill="#2e17ce"/>
<path d="M812.8 119.6L820.6 123.7L817.4 129.5L809.8 125.5z" fill="#2e17ce"/>
<path d="M821.4 124.2L829.0 128.5L825.6 134.2L818.2 129.9z" fill="#2e17ce"/>
<path d="M829.8 129.0L837.3 133.6L833.7 139.2L826.4 134.7z" fill="#2e17ce"/>
<path d="M838.0 134.1L845.3 139.0L841.6 144.4L834.5 139.7z" fill="#4a35d8"/>
<path d="M846.1 139.5L853.3 144.6L849.3 150.0L842.3 144.9z" fill="#2e17ce"/>
<path d="M854.0 145.2L861.0 150.6L856.9 155.7L850.0 150.5z" fill="#2e17ce"/>
<path d="M861.7 151.1L868.5 156.7L864.2 161.7L857.6 156.3z" fill="#5a48dc"/>
<path d="M869.2 157.3L875.8 163.1L871.3 168.0L864.9 162.3z" fill="#2e17ce"/>
<path d="M876.4 163.7L882.8 169.8L878.2 174.5L872.0 168.6z" fill="#2e17ce"/>
<path d="M883.5 170.4L889.7 176.7L884.9 181.2L878.9 175.1z" fill="#2e17ce"/>
<path d="M890.3 177.3L896.3 183.8L891.4 188.2L885.5 181.9z" fill="#2e17ce"/>
<path d="M896.9 184.4L902.7 191.1L897.6 195.3L892.0 188.8z" fill="#2e17ce"/>
<path d="M903.3 191.8L908.8 198.6L903.6 202.7L898.2 196.0z" fill="#2e17ce"/>
<path d="M909.3 199.3L914.7 206.4L909.3 210.3L904.1 203.4z" fill="#2e17ce"/>
<path d="M915.2 207.1L920.3 214.3L914.8 218.0L909.8 211.0z" fill="#2e17ce"/>
<path d="M920.8 215.1L925.6 222.4L920.0 225.9L915.3 218.8z" fill="#2e17ce"/>
<path d="M926.1 223.2L930.6 230.7L924.9 234.0L920.5 226.7z" fill="#2e17ce"/>
<path d="M931.1 231.5L935.4 239.2L929.6 242.3L925.4 234.8z" fill="#2e17ce"/>
<path d="M935.8 240.0L939.9 247.8L934.0 250.7L930.0 243.1z" fill="#2e17ce"/>
<path d="M940.3 248.6L944.1 256.5L938.1 259.3L934.4 251.5z" fill="#2e17ce"/>
<path d="M944.5 257.4L948.0 265.4L941.9 268.0L938.5 260.1z" fill="#2e17ce"/>
<path d="M948.3 266.3L951.6 274.4L945.4 276.8L942.2 268.8z" fill="#2e17ce"/>
<path d="M951.9 275.3L954.9 283.6L948.6 285.7L945.7 277.6z" fill="#2e17ce"/>
<path d="M955.2 284.4L957.9 292.8L951.6 294.7L948.9 286.6z" fill="#2e17ce"/>
<path d="M958.1 293.7L960.5 302.2L954.2 303.9L951.8 295.6z" fill="#2e17ce"/>
<path d="M960.8 303.0L962.9 311.6L956.5 313.1L954.4 304.7z" fill="#2e17ce"/>
<path d="M963.1 312.5L964.9 321.1L958.5 322.3L956.7 313.9z" fill="#2e17ce"/>
<path d="M965.1 322.0L966.7 330.6L960.1 331.7L958.6 323.2z" fill="#2e17ce"/>
<path d="M966.8 331.5L968.1 340.2L961.5 341.1L960.3 332.6z" fill="#2e17ce"/>
<path d="M968.2 341.1L969.1 349.9L962.6 350.5L961.6 342.0z" fill="#2e17ce"/>
<path d="M969.2 350.8L969.9 359.6L963.3 360.0L962.6 351.4z" fill="#2e17ce"/>
<path d="M969.9 360.5L970.3 369.3L963.7 369.4L963.3 360.8z" fill="#2e17ce"/>
<path d="M970.3 370.2L970.4 379.0L963.8 378.9L963.7 370.3z" fill="#2e17ce"/>
<path d="M970.4 379.9L970.2 388.7L963.6 388.4L963.8 379.8z" fill="#2e17ce"/>
<path d="M970.1 389.6L969.6 398.4L963.0 397.9L963.5 389.3z" fill="#2e17ce"/>
<path d="M969.5 399.3L968.7 408.0L962.2 407.3L963.0 398.8z" fill="#2e17ce"/>
<path d="M968.6 408.9L967.5 417.7L961.0 416.7L962.1 408.2z" fill="#5a48dc"/>
<path d="M967.4 418.6L966.0 427.3L959.5 426.1L960.9 417.6z" fill="#2e17ce"/>
<path d="M965.8 428.2L964.1 436.8L957.7 435.4L959.3 427.0z" fill="#2e17ce"/>
<path d="M964.0 437.7L962.0 446.3L955.6 444.7L957.5 436.3z" fill="#2e17ce"/>
<path d="M961.8 447.1L959.5 455.7L953.1 453.9L955.4 445.5z" fill="#2e17ce"/>
<path d="M959.2 456.5L956.7 464.9L950.4 462.9L952.9 454.7z" fill="#2e17ce"/>
<path d="M956.4 465.8L953.6 474.1L947.4 471.9L950.1 463.8z" fill="#2e17ce"/>
<path d="M953.3 475.0L950.2 483.2L944.0 480.8L947.1 472.8z" fill="#2e17ce"/>
<path d="M949.8 484.1L946.4 492.2L940.4 489.6L943.7 481.6z" fill="#2e17ce"/>
<path d="M946.1 493.0L942.4 501.0L936.5 498.2L940.0 490.4z" fill="#2e17ce"/>
<path d="M942.0 501.9L938.1 509.7L932.2 506.7L936.1 499.0z" fill="#2e17ce"/>
<path d="M937.7 510.6L933.5 518.3L927.7 515.1L931.8 507.5z" fill="#2e17ce"/>
<path d="M933.1 519.1L928.6 526.7L923.0 523.3L927.3 515.8z" fill="#2e17ce"/>
<path d="M928.1 527.5L923.5 534.9L917.9 531.3L922.5 524.0z" fill="#2e17ce"/>
<path d="M923.0 535.7L918.0 542.9L912.6 539.2L917.4 532.0z" fill="#2e17ce"/>
<path d="M917.5 543.7L912.3 550.8L907.0 546.8L912.1 539.9z" fill="#2e17ce"/>
<path d="M911.8 551.5L906.3 558.5L901.2 554.3L906.5 547.5z" fill="#2e17ce"/>
<path d="M905.8 559.2L900.1 565.9L895.1 561.6L900.6 555.0z" fill="#4a35d8"/>
<path d="M899.5 566.6L893.6 573.2L888.8 568.7L894.5 562.3z" fill="#2e17ce"/>
<path d="M893.0 573.8L886.9 580.2L882.2 575.5L888.2 569.3z" fill="#2e17ce"/>
<path d="M886.3 580.8L880.0 587.0L875.5 582.2L881.6 576.2z" fill="#2e17ce"/>
<path d="M879.3 587.6L872.8 593.5L868.5 588.6L874.8 582.8z" fill="#2e17ce"/>
<path d="M872.1 594.1L865.4 599.8L861.2 594.7L867.8 589.2z" fill="#2e17ce"/>
<path d="M864.7 600.4L857.9 605.9L853.8 600.7L860.6 595.3z" fill="#6e5fe0"/>
<path d="M857.1 606.4L850.1 611.7L846.2 606.3L853.1 601.2z" fill="#2e17ce"/>
<path d="M849.3 612.2L842.1 617.2L838.4 611.7L845.5 606.8z" fill="#2e17ce"/>
<path d="M841.3 617.7L833.9 622.5L830.4 616.9L837.7 612.2z" fill="#2e17ce"/>
<path d="M833.2 623.0L825.6 627.5L822.3 621.7L829.7 617.3z" fill="#2e17ce"/>
<path d="M824.8 627.9L817.1 632.2L814.0 626.3L821.5 622.2z" fill="#2e17ce"/>
<path d="M816.3 632.6L808.4 636.6L805.5 630.6L813.2 626.8z" fill="#2e17ce"/>
<path d="M807.6 637.0L799.7 640.7L797.0 634.7L804.7 631.0z" fill="#2e17ce"/>
<path d="M798.8 641.1L790.7 644.5L788.2 638.4L796.1 635.0z" fill="#2e17ce"/>
<path d="M789.9 644.9L781.7 648.0L779.4 641.9L787.4 638.7z" fill="#2e17ce"/>
<path d="M780.8 648.4L772.5 651.3L770.4 645.0L778.6 642.2z" fill="#2e17ce"/>
<path d="M771.7 651.5L763.3 654.2L761.4 647.8L769.6 645.3z" fill="#2e17ce"/>
<path d="M762.4 654.4L753.9 656.8L752.2 650.4L760.5 648.1z" fill="#2e17ce"/>
<path d="M753.0 657.0L744.5 659.0L743.0 652.6L751.4 650.6z" fill="#2e17ce"/>
<path d="M656.7 664.9L647.9 664.1L648.7 657.5L657.3 658.4z" fill="#2e17ce"/>
<path d="M647.0 664.0L638.3 662.8L639.3 656.2L647.8 657.4z" fill="#2e17ce"/>
<path d="M637.4 662.6L628.7 661.2L629.9 654.7L638.4 656.1z" fill="#2e17ce"/>
<path d="M627.8 661.0L619.2 659.2L620.6 652.8L629.1 654.5z" fill="#2e17ce"/>
<path d="M618.3 659.0L609.8 657.0L611.4 650.6L619.8 652.6z" fill="#3a22d6"/>
<path d="M608.9 656.8L600.4 654.4L602.3 648.1L610.6 650.4z" fill="#2e17ce"/>
<path d="M599.5 654.2L591.1 651.5L593.2 645.3L601.4 647.8z" fill="#2e17ce"/>
<path d="M590.3 651.3L582.0 648.4L584.2 642.2L592.4 645.0z" fill="#2e17ce"/>
<path d="M581.1 648.0L572.9 644.9L575.4 638.7L583.4 641.9z" fill="#2e17ce"/>
<path d="M572.1 644.5L564.0 641.1L566.7 635.0L574.6 638.4z" fill="#2e17ce"/>
<path d="M563.1 640.7L555.2 637.0L558.1 631.0L565.8 634.7z" fill="#3a22d6"/>
<path d="M554.4 636.6L546.5 632.6L549.6 626.8L557.3 630.6z" fill="#4a35d8"/>
<path d="M545.7 632.2L538.0 627.9L541.3 622.2L548.8 626.3z" fill="#2e17ce"/>
<path d="M537.2 627.5L529.6 623.0L533.1 617.3L540.5 621.7z" fill="#2e17ce"/>
<path d="M528.9 622.5L521.5 617.7L525.1 612.2L532.4 616.9z" fill="#2e17ce"/>
<path d="M520.7 617.2L513.5 612.2L517.3 606.8L524.4 611.7z" fill="#2e17ce"/>
<path d="M512.7 611.7L505.7 606.4L509.7 601.2L516.6 606.3z" fill="#2e17ce"/>
<path d="M504.9 605.9L498.1 600.4L502.2 595.3L509.0 600.7z" fill="#2e17ce"/>
<path d="M497.4 599.8L490.7 594.1L495.0 589.2L501.6 594.7z" fill="#2e17ce"/>
<path d="M490.0 593.5L483.5 587.6L488.0 582.8L494.3 588.6z" fill="#2e17ce"/>
<path d="M482.8 587.0L476.5 580.8L481.2 576.2L487.3 582.2z" fill="#2e17ce"/>
<path d="M475.9 580.2L469.8 573.8L474.6 569.3L480.6 575.5z" fill="#2e17ce"/>
<path d="M469.2 573.2L463.3 566.6L468.3 562.3L474.0 568.7z" fill="#2e17ce"/>
<path d="M462.7 565.9L457.0 559.2L462.2 555.0L467.7 561.6z" fill="#4a35d8"/>
<path d="M456.5 558.5L451.0 551.5L456.3 547.5L461.6 554.3z" fill="#2e17ce"/>
<path d="M450.5 550.8L445.3 543.7L450.7 539.9L455.8 546.8z" fill="#2e17ce"/>
<path d="M444.8 542.9L439.8 535.7L445.4 532.0L450.2 539.2z" fill="#2e17ce"/>
<path d="M439.3 534.9L434.7 527.5L440.3 524.0L444.9 531.3z" fill="#2e17ce"/>
<path d="M434.2 526.7L429.7 519.1L435.5 515.8L439.8 523.3z" fill="#2e17ce"/>
<path d="M429.3 518.3L425.1 510.6L431.0 507.5L435.1 515.1z" fill="#3a22d6"/>
<path d="M424.7 509.7L420.8 501.9L426.7 499.0L430.6 506.7z" fill="#2e17ce"/>
<path d="M420.4 501.0L416.7 493.0L422.8 490.4L426.3 498.2z" fill="#2e17ce"/>
<path d="M416.4 492.2L413.0 484.1L419.1 481.6L422.4 489.6z" fill="#2e17ce"/>
<path d="M412.6 483.2L409.5 475.0L415.7 472.8L418.8 480.8z" fill="#2e17ce"/>
<path d="M409.2 474.1L406.4 465.8L412.7 463.8L415.4 471.9z" fill="#2e17ce"/>
<path d="M406.1 464.9L403.6 456.5L409.9 454.7L412.4 462.9z" fill="#2e17ce"/>
<path d="M403.3 455.7L401.0 447.1L407.4 445.5L409.7 453.9z" fill="#2e17ce"/>
<path d="M400.8 446.3L398.8 437.7L405.3 436.3L407.2 444.7z" fill="#2e17ce"/>
<path d="M398.7 436.8L397.0 428.2L403.5 427.0L405.1 435.4z" fill="#2e17ce"/>
<path d="M396.8 427.3L395.4 418.6L401.9 417.6L403.3 426.1z" fill="#2e17ce"/>
<path d="M395.3 417.7L394.2 408.9L400.7 408.2L401.8 416.7z" fill="#2e17ce"/>
<path d="M394.1 408.0L393.3 399.3L399.8 398.8L400.6 407.3z" fill="#2e17ce"/>
<path d="M393.2 398.4L392.7 389.6L399.3 389.3L399.8 397.9z" fill="#2e17ce"/>
<path d="M392.6 388.7L392.4 379.9L399.0 379.8L399.2 388.4z" fill="#2e17ce"/>
<path d="M392.4 379.0L392.5 370.2L399.1 370.3L399.0 378.9z" fill="#2e17ce"/>
<path d="M392.5 369.3L392.9 360.5L399.5 360.8L399.1 369.4z" fill="#2e17ce"/>
<path d="M392.9 359.6L393.6 350.8L400.2 351.4L399.5 360.0z" fill="#2e17ce"/>
<path d="M393.7 349.9L394.6 341.1L401.2 342.0L400.2 350.5z" fill="#2e17ce"/>
<path d="M394.7 340.2L396.0 331.5L402.5 332.6L401.3 341.1z" fill="#2e17ce"/>
<path d="M396.1 330.6L397.7 322.0L404.2 323.2L402.7 331.7z" fill="#2e17ce"/>
<path d="M397.9 321.1L399.7 312.5L406.1 313.9L404.3 322.3z" fill="#2e17ce"/>
<path d="M399.9 311.6L402.0 303.0L408.4 304.7L406.3 313.1z" fill="#2e17ce"/>
<path d="M402.3 302.2L404.7 293.7L411.0 295.6L408.6 303.9z" fill="#2e17ce"/>
<path d="M404.9 292.8L407.6 284.4L413.9 286.6L411.2 294.7z" fill="#2e17ce"/>
<path d="M407.9 283.6L410.9 275.3L417.1 277.6L414.2 285.7z" fill="#2e17ce"/>
<path d="M411.2 274.4L414.5 266.3L420.6 268.8L417.4 276.8z" fill="#2e17ce"/>
<path d="M414.8 265.4L418.3 257.4L424.3 260.1L420.9 268.0z" fill="#6e5fe0"/>
<path d="M418.7 256.5L422.5 248.6L428.4 251.5L424.7 259.3z" fill="#2e17ce"/>
<path d="M422.9 247.8L427.0 240.0L432.8 243.1L428.8 250.7z" fill="#2e17ce"/>
<path d="M427.4 239.2L431.7 231.5L437.4 234.8L433.2 242.3z" fill="#2e17ce"/>
<path d="M432.2 230.7L436.7 223.2L442.3 226.7L437.9 234.0z" fill="#2e17ce"/>
<path d="M437.2 222.4L442.0 215.1L447.5 218.8L442.8 225.9z" fill="#2e17ce"/>
<path d="M442.5 214.3L447.6 207.1L453.0 211.0L448.0 218.0z" fill="#2e17ce"/>
<path d="M448.1 206.4L453.5 199.3L458.7 203.4L453.5 210.3z" fill="#2e17ce"/>
<path d="M454.0 198.6L459.5 191.8L464.6 196.0L459.2 202.7z" fill="#2e17ce"/>
<path d="M460.1 191.1L465.9 184.4L470.8 188.8L465.2 195.3z" fill="#2e17ce"/>
<path d="M466.5 183.8L472.5 177.3L477.3 181.9L471.4 188.2z" fill="#4a35d8"/>
<path d="M473.1 176.7L479.3 170.4L483.9 175.1L477.9 181.2z" fill="#2e17ce"/>
<path d="M480.0 169.8L486.4 163.7L490.8 168.6L484.6 174.5z" fill="#2e17ce"/>
<path d="M487.0 163.1L493.6 157.3L497.9 162.3L491.5 168.0z" fill="#2e17ce"/>
<path d="M494.3 156.7L501.1 151.1L505.2 156.3L498.6 161.7z" fill="#2e17ce"/>
<path d="M501.8 150.6L508.8 145.2L512.8 150.5L505.9 155.7z" fill="#2e17ce"/>
<path d="M509.5 144.6L516.7 139.5L520.5 144.9L513.5 150.0z" fill="#5a48dc"/>
<path d="M517.5 139.0L524.8 134.1L528.3 139.7L521.2 144.4z" fill="#2e17ce"/>
<path d="M525.5 133.6L533.0 129.0L536.4 134.7L529.1 139.2z" fill="#2e17ce"/>
<path d="M533.8 128.5L541.4 124.2L544.6 129.9L537.2 134.2z" fill="#2e17ce"/>
<path d="M542.2 123.7L550.0 119.6L553.0 125.5L545.4 129.5z" fill="#2e17ce"/>
<path d="M550.8 119.2L558.7 115.3L561.5 121.3L553.8 125.1z" fill="#2e17ce"/>
<path d="M559.6 114.9L567.6 111.4L570.2 117.4L562.3 120.9z" fill="#2e17ce"/>
<path d="M568.4 111.0L576.6 107.7L579.0 113.8L571.0 117.1z" fill="#2e17ce"/>
<path d="M577.4 107.4L585.7 104.3L587.9 110.5L579.8 113.5z" fill="#2e17ce"/>
<path d="M586.5 104.0L594.9 101.2L596.9 107.5L588.7 110.2z" fill="#2e17ce"/>
<path d="M595.8 101.0L604.2 98.5L606.0 104.9L597.7 107.3z" fill="#2e17ce"/>
<path d="M605.1 98.3L613.6 96.1L615.2 102.5L606.8 104.6z" fill="#2e17ce"/>
<path d="M614.5 95.9L623.1 93.9L624.4 100.4L616.0 102.3z" fill="#5a48dc"/>
<path d="M624.0 93.8L632.6 92.1L633.7 98.7L625.3 100.2z" fill="#2e17ce"/>
<path d="M633.5 92.0L642.2 90.7L643.1 97.2L634.6 98.5z" fill="#2e17ce"/>
<path d="M643.1 90.5L651.9 89.5L652.5 96.1L644.0 97.1z" fill="#2e17ce"/>
<path d="M652.8 89.4L661.5 88.7L662.0 95.3L653.4 96.0z" fill="#2e17ce"/>
<path d="M662.4 88.6L671.2 88.2L671.5 94.8L662.9 95.2z" fill="#2e17ce"/>
<path d="M672.1 88.1L680.9 88.0L681.0 94.6L672.4 94.7z" fill="#2e17ce"/>
<path d="M681.9 95.5L690.7 95.7L690.4 102.2L681.8 102.1z" fill="#2e17ce"/>
<path d="M691.6 95.7L700.4 96.1L699.9 102.7L691.3 102.3z" fill="#2e17ce"/>
<path d="M701.3 96.2L710.0 97.0L709.4 103.5L700.8 102.8z" fill="#2e17ce"/>
<path d="M711.0 97.1L719.7 98.1L718.8 104.7L710.3 103.6z" fill="#2e17ce"/>
<path d="M720.6 98.2L729.3 99.6L728.2 106.1L719.7 104.8z" fill="#2e17ce"/>
<path d="M730.2 99.8L738.8 101.4L737.5 107.9L729.1 106.3z" fill="#2e17ce"/>
<path d="M739.7 101.6L748.3 103.6L746.8 110.0L738.4 108.1z" fill="#4a35d8"/>
<path d="M749.2 103.8L757.7 106.0L755.9 112.4L747.6 110.2z" fill="#2e17ce"/>
<path d="M758.6 106.3L767.0 108.8L765.0 115.1L756.8 112.6z" fill="#3a22d6"/>
<path d="M767.9 109.1L776.2 112.0L774.0 118.2L765.9 115.4z" fill="#5a48dc"/>
<path d="M777.1 112.3L785.3 115.4L782.9 121.5L774.8 118.5z" fill="#4a35d8"/>
<path d="M786.2 115.7L794.3 119.1L791.6 125.2L783.7 121.9z" fill="#2e17ce"/>
<path d="M795.1 119.5L803.1 123.2L800.3 129.1L792.5 125.5z" fill="#2e17ce"/>
<path d="M803.9 123.6L811.8 127.5L808.8 133.4L801.1 129.5z" fill="#2e17ce"/>
<path d="M812.6 128.0L820.3 132.2L817.1 137.9L809.5 133.8z" fill="#2e17ce"/>
<path d="M821.1 132.6L828.7 137.1L825.3 142.7L817.9 138.4z" fill="#2e17ce"/>
<path d="M829.5 137.6L836.9 142.4L833.3 147.9L826.0 143.2z" fill="#2e17ce"/>
<path d="M837.7 142.9L844.9 147.9L841.1 153.2L834.0 148.3z" fill="#3a22d6"/>
<path d="M845.7 148.4L852.7 153.6L848.7 158.9L841.8 153.8z" fill="#2e17ce"/>
<path d="M853.4 154.2L860.3 159.7L856.1 164.8L849.4 159.4z" fill="#2e17ce"/>
<path d="M861.0 160.3L867.7 166.0L863.4 170.9L856.8 165.3z" fill="#2e17ce"/>
<path d="M868.4 166.6L874.9 172.5L870.4 177.3L864.0 171.5z" fill="#2e17ce"/>
<path d="M875.6 173.2L881.8 179.4L877.1 184.0L871.0 178.0z" fill="#2e17ce"/>
<path d="M882.5 180.0L888.5 186.4L883.7 190.9L877.8 184.6z" fill="#2e17ce"/>
<path d="M889.2 187.1L895.0 193.6L890.0 197.9L884.3 191.5z" fill="#3a22d6"/>
<path d="M895.6 194.3L901.2 201.1L896.0 205.3L890.6 198.6z" fill="#2e17ce"/>
<path d="M901.8 201.8L907.1 208.8L901.8 212.8L896.6 206.0z" fill="#2e17ce"/>
<path d="M907.7 209.6L912.8 216.7L907.4 220.5L902.4 213.5z" fill="#2e17ce"/>
<path d="M913.3 217.5L918.2 224.8L912.7 228.4L907.9 221.2z" fill="#2e17ce"/>
<path d="M918.7 225.6L923.3 233.1L917.6 236.4L913.1 229.1z" fill="#2e17ce"/>
<path d="M923.8 233.8L928.1 241.5L922.4 244.7L918.1 237.2z" fill="#2e17ce"/>
<path d="M928.6 242.3L932.7 250.1L926.8 253.1L922.8 245.5z" fill="#2e17ce"/>
<path d="M933.1 250.9L936.9 258.8L930.9 261.6L927.2 253.9z" fill="#4a35d8"/>
<path d="M937.3 259.7L940.8 267.7L934.7 270.3L931.3 262.4z" fill="#2e17ce"/>
<path d="M941.2 268.6L944.4 276.8L938.3 279.1L935.1 271.1z" fill="#2e17ce"/>
<path d="M944.8 277.6L947.7 285.9L941.5 288.0L938.6 279.9z" fill="#4a35d8"/>
<path d="M948.0 286.8L950.7 295.1L944.4 297.1L941.8 288.9z" fill="#2e17ce"/>
<path d="M951.0 296.0L953.4 304.5L947.0 306.2L944.7 297.9z" fill="#2e17ce"/>
<path d="M953.6 305.4L955.7 313.9L949.3 315.4L947.3 307.0z" fill="#2e17ce"/>
<path d="M955.9 314.8L957.8 323.4L951.3 324.7L949.5 316.3z" fill="#2e17ce"/>
<path d="M957.9 324.3L959.4 333.0L952.9 334.0L951.4 325.6z" fill="#3a22d6"/>
<path d="M959.6 333.9L960.8 342.6L954.2 343.4L953.1 334.9z" fill="#2e17ce"/>
<path d="M960.9 343.5L961.8 352.3L955.2 352.9L954.3 344.3z" fill="#2e17ce"/>
<path d="M961.9 353.2L962.5 362.0L955.9 362.3L955.3 353.7z" fill="#2e17ce"/>
<path d="M962.5 362.9L962.8 371.7L956.3 371.8L956.0 363.2z" fill="#5a48dc"/>
<path d="M962.9 372.6L962.9 381.4L956.3 381.3L956.3 372.7z" fill="#2e17ce"/>
<path d="M962.8 382.3L962.5 391.1L956.0 390.8L956.3 382.2z" fill="#2e17ce"/>
<path d="M962.5 392.0L961.9 400.8L955.3 400.3L955.9 391.7z" fill="#2e17ce"/>
<path d="M961.8 401.7L960.9 410.5L954.3 409.7L955.2 401.1z" fill="#2e17ce"/>
<path d="M960.8 411.4L959.6 420.1L953.1 419.1L954.2 410.6z" fill="#2e17ce"/>
<path d="M959.4 421.0L957.9 429.7L951.4 428.4L952.9 420.0z" fill="#4a35d8"/>
<path d="M957.8 430.6L955.9 439.2L949.5 437.7L951.3 429.3z" fill="#2e17ce"/>
<path d="M955.7 440.1L953.6 448.6L947.3 447.0L949.3 438.6z" fill="#2e17ce"/>
<path d="M953.4 449.5L951.0 458.0L944.7 456.1L947.0 447.8z" fill="#3a22d6"/>
<path d="M950.7 458.9L948.0 467.2L941.8 465.1L944.4 456.9z" fill="#2e17ce"/>
<path d="M947.7 468.1L944.8 476.4L938.6 474.1L941.5 466.0z" fill="#2e17ce"/>
<path d="M944.4 477.2L941.2 485.4L935.1 482.9L938.3 474.9z" fill="#2e17ce"/>
<path d="M940.8 486.3L937.3 494.3L931.3 491.6L934.7 483.7z" fill="#2e17ce"/>
<path d="M936.9 495.2L933.1 503.1L927.2 500.1L930.9 492.4z" fill="#2e17ce"/>
<path d="M932.7 503.9L928.6 511.7L922.8 508.5L926.8 500.9z" fill="#2e17ce"/>
<path d="M928.1 512.5L923.8 520.2L918.1 516.8L922.4 509.3z" fill="#2e17ce"/>
<path d="M923.3 520.9L918.7 528.4L913.1 524.9L917.6 517.6z" fill="#2e17ce"/>
<path d="M918.2 529.2L913.3 536.5L907.9 532.8L912.7 525.6z" fill="#2e17ce"/>
<path d="M912.8 537.3L907.7 544.4L902.4 540.5L907.4 533.5z" fill="#2e17ce"/>
<path d="M907.1 545.2L901.8 552.2L896.6 548.0L901.8 541.2z" fill="#2e17ce"/>
<path d="M901.2 552.9L895.6 559.7L890.6 555.4L896.0 548.7z" fill="#3a22d6"/>
<path d="M895.0 560.4L889.2 566.9L884.3 562.5L890.0 556.1z" fill="#2e17ce"/>
<path d="M888.5 567.6L882.5 574.0L877.8 569.4L883.7 563.1z" fill="#2e17ce"/>
<path d="M881.8 574.6L875.6 580.8L871.0 576.0L877.1 570.0z" fill="#2e17ce"/>
<path d="M874.9 581.5L868.4 587.4L864.0 582.5L870.4 576.7z" fill="#3a22d6"/>
<path d="M867.7 588.0L861.0 593.7L856.8 588.7L863.4 583.1z" fill="#2e17ce"/>
<path d="M860.3 594.3L853.4 599.8L849.4 594.6L856.1 589.2z" fill="#3a22d6"/>
<path d="M852.7 600.4L845.7 605.6L841.8 600.2L848.7 595.1z" fill="#2e17ce"/>
<path d="M844.9 606.1L837.7 611.1L834.0 605.7L841.1 600.8z" fill="#2e17ce"/>
<path d="M836.9 611.6L829.5 616.4L826.0 610.8L833.3 606.1z" fill="#2e17ce"/>
<path d="M828.7 616.9L821.1 621.4L817.9 615.6L825.3 611.3z" fill="#2e17ce"/>
<path d="M820.3 621.8L812.6 626.0L809.5 620.2L817.1 616.1z" fill="#2e17ce"/>
<path d="M811.8 626.5L803.9 630.4L801.1 624.5L808.8 620.6z" fill="#2e17ce"/>
<path d="M803.1 630.8L795.1 634.5L792.5 628.5L800.3 624.9z" fill="#2e17ce"/>
<path d="M794.3 634.9L786.2 638.3L783.7 632.1L791.6 628.8z" fill="#2e17ce"/>
<path d="M785.3 638.6L777.1 641.7L774.8 635.5L782.9 632.5z" fill="#2e17ce"/>
<path d="M776.2 642.0L767.9 644.9L765.9 638.6L774.0 635.8z" fill="#2e17ce"/>
<path d="M767.0 645.2L758.6 647.7L756.8 641.4L765.0 638.9z" fill="#2e17ce"/>
<path d="M757.7 648.0L749.2 650.2L747.6 643.8L755.9 641.6z" fill="#2e17ce"/>
<path d="M748.3 650.4L739.7 652.4L738.4 645.9L746.8 644.0z" fill="#2e17ce"/>
<path d="M738.8 652.6L730.2 654.2L729.1 647.7L737.5 646.1z" fill="#2e17ce"/>
<path d="M729.3 654.4L720.6 655.8L719.7 649.2L728.2 647.9z" fill="#2e17ce"/>
<path d="M719.7 655.9L711.0 656.9L710.3 650.4L718.8 649.3z" fill="#2e17ce"/>
<path d="M710.0 657.0L701.3 657.8L700.8 651.2L709.4 650.5z" fill="#2e17ce"/>
<path d="M700.4 657.9L691.6 658.3L691.3 651.7L699.9 651.3z" fill="#2e17ce"/>
<path d="M690.7 658.3L681.9 658.5L681.8 651.9L690.4 651.8z" fill="#2e17ce"/>
<path d="M680.9 658.5L672.1 658.3L672.4 651.8L681.0 651.9z" fill="#2e17ce"/>
<path d="M671.2 658.3L662.4 657.9L662.9 651.3L671.5 651.7z" fill="#2e17ce"/>
<path d="M661.5 657.8L652.8 657.0L653.4 650.5L662.0 651.2z" fill="#2e17ce"/>
<path d="M651.8 656.9L643.1 655.9L644.0 649.3L652.5 650.4z" fill="#2e17ce"/>
<path d="M642.2 655.8L633.5 654.4L634.6 647.9L643.1 649.2z" fill="#2e17ce"/>
<path d="M632.6 654.2L624.0 652.6L625.3 646.1L633.7 647.7z" fill="#3a22d6"/>
<path d="M623.1 652.4L614.5 650.4L616.0 644.0L624.4 645.9z" fill="#2e17ce"/>
<path d="M613.6 650.2L605.1 648.0L606.9 641.6L615.2 643.8z" fill="#2e17ce"/>
<path d="M604.2 647.7L595.8 645.2L597.8 638.9L606.0 641.4z" fill="#2e17ce"/>
<path d="M594.9 644.9L586.6 642.0L588.8 635.8L596.9 638.6z" fill="#2e17ce"/>
<path d="M585.7 641.7L577.5 638.6L579.9 632.5L588.0 635.5z" fill="#2e17ce"/>
<path d="M576.6 638.3L568.5 634.9L571.2 628.8L579.1 632.1z" fill="#2e17ce"/>
<path d="M567.7 634.5L559.7 630.8L562.5 624.9L570.3 628.5z" fill="#2e17ce"/>
<path d="M558.9 630.4L551.0 626.5L554.0 620.6L561.7 624.5z" fill="#2e17ce"/>
<path d="M550.2 626.0L542.5 621.8L545.7 616.1L553.3 620.2z" fill="#4a35d8"/>
<path d="M541.7 621.4L534.1 616.9L537.5 611.3L544.9 615.6z" fill="#2e17ce"/>
<path d="M533.3 616.4L525.9 611.6L529.5 606.1L536.8 610.8z" fill="#2e17ce"/>
<path d="M525.1 611.1L517.9 606.1L521.7 600.8L528.8 605.7z" fill="#4a35d8"/>
<path d="M517.1 605.6L510.1 600.4L514.1 595.1L521.0 600.2z" fill="#2e17ce"/>
<path d="M509.4 599.8L502.5 594.3L506.7 589.2L513.4 594.6z" fill="#2e17ce"/>
<path d="M501.8 593.7L495.1 588.0L499.4 583.1L506.0 588.7z" fill="#4a35d8"/>
<path d="M494.4 587.4L487.9 581.5L492.4 576.7L498.8 582.5z" fill="#2e17ce"/>
<path d="M487.2 580.8L481.0 574.6L485.7 570.0L491.8 576.0z" fill="#2e17ce"/>
<path d="M480.3 574.0L474.3 567.6L479.1 563.1L485.0 569.4z" fill="#2e17ce"/>
<path d="M473.6 566.9L467.8 560.4L472.8 556.1L478.5 562.5z" fill="#2e17ce"/>
<path d="M467.2 559.7L461.6 552.9L466.8 548.7L472.2 555.4z" fill="#2e17ce"/>
<path d="M461.0 552.2L455.7 545.2L461.0 541.2L466.2 548.0z" fill="#2e17ce"/>
<path d="M455.1 544.4L450.0 537.3L455.4 533.5L460.4 540.5z" fill="#2e17ce"/>
<path d="M449.5 536.5L444.6 529.2L450.1 525.6L454.9 532.8z" fill="#2e17ce"/>
<path d="M444.1 528.4L439.5 520.9L445.2 517.6L449.7 524.9z" fill="#2e17ce"/>
<path d="M439.0 520.2L434.7 512.5L440.4 509.3L444.7 516.8z" fill="#3a22d6"/>
<path d="M434.2 511.7L430.1 503.9L436.0 500.9L440.0 508.5z" fill="#2e17ce"/>
<path d="M429.7 503.1L425.9 495.2L431.9 492.4L435.6 500.1z" fill="#2e17ce"/>
<path d="M425.5 494.3L422.0 486.3L428.1 483.7L431.5 491.6z" fill="#2e17ce"/>
<path d="M421.6 485.4L418.4 477.2L424.5 474.9L427.7 482.9z" fill="#2e17ce"/>
<path d="M418.0 476.4L415.1 468.1L421.3 466.0L424.2 474.1z" fill="#3a22d6"/>
<path d="M414.8 467.2L412.1 458.9L418.4 456.9L421.0 465.1z" fill="#4a35d8"/>
<path d="M411.8 458.0L409.4 449.5L415.8 447.8L418.1 456.1z" fill="#2e17ce"/>
<path d="M409.2 448.6L407.1 440.1L413.5 438.6L415.5 447.0z" fill="#4a35d8"/>
<path d="M406.9 439.2L405.0 430.6L411.5 429.3L413.3 437.7z" fill="#2e17ce"/>
<path d="M404.9 429.7L403.4 421.0L409.9 420.0L411.4 428.4z" fill="#2e17ce"/>
<path d="M403.2 420.1L402.0 411.4L408.6 410.6L409.7 419.1z" fill="#5a48dc"/>
<path d="M401.9 410.5L401.0 401.7L407.6 401.1L408.5 409.7z" fill="#2e17ce"/>
<path d="M400.9 400.8L400.3 392.0L406.9 391.7L407.5 400.3z" fill="#2e17ce"/>
<path d="M400.3 391.1L400.0 382.3L406.5 382.2L406.8 390.8z" fill="#2e17ce"/>
<path d="M399.9 381.4L399.9 372.6L406.5 372.7L406.5 381.3z" fill="#2e17ce"/>
<path d="M400.0 371.7L400.3 362.9L406.8 363.2L406.5 371.8z" fill="#2e17ce"/>
<path d="M400.3 362.0L400.9 353.2L407.5 353.7L406.9 362.3z" fill="#2e17ce"/>
<path d="M401.0 352.3L401.9 343.5L408.5 344.3L407.6 352.9z" fill="#2e17ce"/>
<path d="M402.0 342.6L403.2 333.9L409.7 334.9L408.6 343.4z" fill="#2e17ce"/>
<path d="M403.4 333.0L404.9 324.3L411.4 325.6L409.9 334.0z" fill="#2e17ce"/>
<path d="M405.0 323.4L406.9 314.8L413.3 316.3L411.5 324.7z" fill="#2e17ce"/>
<path d="M407.1 313.9L409.2 305.4L415.5 307.0L413.5 315.4z" fill="#2e17ce"/>
<path d="M409.4 304.5L411.8 296.0L418.1 297.9L415.8 306.2z" fill="#2e17ce"/>
<path d="M412.1 295.1L414.8 286.8L421.0 288.9L418.4 297.1z" fill="#2e17ce"/>
<path d="M415.1 285.9L418.0 277.6L424.2 279.9L421.3 288.0z" fill="#2e17ce"/>
<path d="M418.4 276.8L421.6 268.6L427.7 271.1L424.5 279.1z" fill="#2e17ce"/>
<path d="M422.0 267.7L425.5 259.7L431.5 262.4L428.1 270.3z" fill="#2e17ce"/>
<path d="M425.9 258.8L429.7 250.9L435.6 253.9L431.9 261.6z" fill="#5a48dc"/>
<path d="M430.1 250.1L434.2 242.3L440.0 245.5L436.0 253.1z" fill="#2e17ce"/>
<path d="M434.7 241.5L439.0 233.8L444.7 237.2L440.4 244.7z" fill="#4a35d8"/>
<path d="M439.5 233.1L444.1 225.6L449.7 229.1L445.2 236.4z" fill="#2e17ce"/>
<path d="M444.6 224.8L449.5 217.5L454.9 221.2L450.1 228.4z" fill="#2e17ce"/>
<path d="M450.0 216.7L455.1 209.6L460.4 213.5L455.4 220.5z" fill="#2e17ce"/>
<path d="M455.7 208.8L461.0 201.8L466.2 206.0L461.0 212.8z" fill="#2e17ce"/>
<path d="M461.6 201.1L467.2 194.3L472.2 198.6L466.8 205.3z" fill="#2e17ce"/>
<path d="M467.8 193.6L473.6 187.1L478.5 191.5L472.8 197.9z" fill="#2e17ce"/>
<path d="M474.3 186.4L480.3 180.0L485.0 184.6L479.1 190.9z" fill="#2e17ce"/>
<path d="M481.0 179.4L487.2 173.2L491.8 178.0L485.7 184.0z" fill="#3a22d6"/>
<path d="M487.9 172.5L494.4 166.6L498.8 171.5L492.4 177.3z" fill="#2e17ce"/>
<path d="M495.1 166.0L501.8 160.3L506.0 165.3L499.4 170.9z" fill="#2e17ce"/>
<path d="M502.5 159.7L509.4 154.2L513.4 159.4L506.7 164.8z" fill="#2e17ce"/>
<path d="M510.1 153.6L517.1 148.4L521.0 153.8L514.1 158.9z" fill="#3a22d6"/>
<path d="M517.9 147.9L525.1 142.9L528.8 148.3L521.7 153.2z" fill="#2e17ce"/>
<path d="M525.9 142.4L533.3 137.6L536.8 143.2L529.5 147.9z" fill="#2e17ce"/>
<path d="M534.1 137.1L541.7 132.6L544.9 138.4L537.5 142.7z" fill="#2e17ce"/>
<path d="M542.5 132.2L550.2 128.0L553.3 133.8L545.7 137.9z" fill="#2e17ce"/>
<path d="M551.0 127.5L558.9 123.6L561.7 129.5L554.0 133.4z" fill="#2e17ce"/>
<path d="M559.7 123.2L567.7 119.5L570.3 125.5L562.5 129.1z" fill="#2e17ce"/>
<path d="M568.5 119.1L576.6 115.7L579.1 121.9L571.2 125.2z" fill="#2e17ce"/>
<path d="M577.5 115.4L585.7 112.3L588.0 118.5L579.9 121.5z" fill="#3a22d6"/>
<path d="M586.6 112.0L594.9 109.1L596.9 115.4L588.8 118.2z" fill="#2e17ce"/>
<path d="M595.8 108.8L604.2 106.3L606.0 112.6L597.8 115.1z" fill="#2e17ce"/>
<path d="M605.1 106.0L613.6 103.8L615.2 110.2L606.9 112.4z" fill="#2e17ce"/>
<path d="M614.5 103.6L623.1 101.6L624.4 108.1L616.0 110.0z" fill="#2e17ce"/>
<path d="M624.0 101.4L632.6 99.8L633.7 106.3L625.3 107.9z" fill="#2e17ce"/>
<path d="M633.5 99.6L642.2 98.2L643.1 104.8L634.6 106.1z" fill="#2e17ce"/>
<path d="M643.1 98.1L651.8 97.1L652.5 103.6L644.0 104.7z" fill="#2e17ce"/>
<path d="M652.8 97.0L661.5 96.2L662.0 102.8L653.4 103.5z" fill="#2e17ce"/>
<path d="M662.4 96.1L671.2 95.7L671.5 102.3L662.9 102.7z" fill="#2e17ce"/>
<path d="M672.1 95.7L680.9 95.5L681.0 102.1L672.4 102.2z" fill="#3a22d6"/>
<path d="M681.9 103.0L690.6 103.2L690.4 109.8L681.8 109.6z" fill="#2e17ce"/>
<path d="M691.5 103.2L700.3 103.7L699.8 110.2L691.3 109.8z" fill="#2e17ce"/>
<path d="M701.2 103.7L709.9 104.5L709.2 111.1L700.7 110.3z" fill="#2e17ce"/>
<path d="M710.8 104.6L719.5 105.7L718.6 112.2L710.1 111.1z" fill="#2e17ce"/>
<path d="M720.4 105.8L729.1 107.2L727.9 113.7L719.5 112.3z" fill="#2e17ce"/>
<path d="M730.0 107.3L738.6 109.0L737.2 115.5L728.8 113.8z" fill="#2e17ce"/>
<path d="M739.4 109.2L748.0 111.2L746.4 117.6L738.0 115.7z" fill="#2e17ce"/>
<path d="M748.9 111.4L757.3 113.7L755.5 120.1L747.2 117.8z" fill="#2e17ce"/>
<path d="M758.2 114.0L766.6 116.6L764.5 122.8L756.3 120.3z" fill="#2e17ce"/>
<path d="M767.4 116.9L775.7 119.7L773.4 125.9L765.4 123.1z" fill="#2e17ce"/>
<path d="M776.5 120.1L784.7 123.2L782.2 129.3L774.3 126.2z" fill="#2e17ce"/>
<path d="M785.6 123.6L793.6 127.0L790.9 133.1L783.0 129.7z" fill="#2e17ce"/>
<path d="M794.4 127.4L802.4 131.1L799.4 137.1L791.7 133.4z" fill="#2e17ce"/>
<path d="M803.2 131.5L811.0 135.6L807.8 141.4L800.2 137.5z" fill="#2e17ce"/>
<path d="M811.8 136.0L819.4 140.3L816.1 146.0L808.6 141.8z" fill="#2e17ce"/>
<path d="M820.2 140.7L827.7 145.3L824.1 150.9L816.8 146.4z" fill="#2e17ce"/>
<path d="M828.4 145.8L835.8 150.6L832.0 156.1L824.9 151.4z" fill="#2e17ce"/>
<path d="M836.5 151.1L843.6 156.2L839.7 161.5L832.8 156.6z" fill="#2e17ce"/>
<path d="M844.4 156.7L851.3 162.1L847.2 167.2L840.5 162.0z" fill="#2e17ce"/>
<path d="M852.1 162.6L858.8 168.2L854.5 173.2L847.9 167.8z" fill="#2e17ce"/>
<path d="M859.5 168.8L866.1 174.6L861.6 179.5L855.2 173.8z" fill="#2e17ce"/>
<path d="M866.7 175.2L873.1 181.2L868.5 185.9L862.3 180.1z" fill="#2e17ce"/>
<path d="M873.8 181.9L879.9 188.1L875.1 192.7L869.1 186.6z" fill="#3a22d6"/>
<path d="M880.5 188.8L886.4 195.2L881.5 199.6L875.7 193.3z" fill="#2e17ce"/>
<path d="M887.0 195.9L892.7 202.6L887.6 206.8L882.1 200.3z" fill="#2e17ce"/>
<path d="M893.3 203.3L898.7 210.2L893.5 214.2L888.2 207.5z" fill="#2e17ce"/>
<path d="M899.3 210.9L904.5 217.9L899.1 221.8L894.1 214.9z" fill="#2e17ce"/>
<path d="M905.0 218.7L910.0 225.9L904.5 229.5L899.6 222.5z" fill="#2e17ce"/>
<path d="M910.5 226.7L915.2 234.1L909.5 237.5L905.0 230.3z" fill="#2e17ce"/>
<path d="M915.6 234.8L920.1 242.4L914.3 245.6L910.0 238.3z" fill="#2e17ce"/>
<path d="M920.5 243.2L924.7 250.9L918.8 253.9L914.7 246.4z" fill="#2e17ce"/>
<path d="M925.1 251.7L929.0 259.6L923.0 262.4L919.2 254.7z" fill="#5a48dc"/>
<path d="M929.4 260.4L933.0 268.4L926.9 271.0L923.4 263.2z" fill="#2e17ce"/>
<path d="M933.3 269.2L936.6 277.3L930.5 279.7L927.2 271.8z" fill="#2e17ce"/>
<path d="M937.0 278.2L940.0 286.4L933.8 288.6L930.8 280.6z" fill="#2e17ce"/>
<path d="M940.3 287.3L943.0 295.6L936.7 297.5L934.1 289.4z" fill="#2e17ce"/>
<path d="M943.3 296.5L945.7 304.9L939.4 306.6L937.0 298.4z" fill="#2e17ce"/>
<path d="M946.0 305.7L948.1 314.2L941.7 315.8L939.6 307.5z" fill="#2e17ce"/>
<path d="M948.3 315.1L950.2 323.7L943.7 325.0L941.9 316.6z" fill="#2e17ce"/>
<path d="M950.3 324.6L951.9 333.2L945.4 334.3L943.9 325.8z" fill="#2e17ce"/>
<path d="M952.0 334.1L953.3 342.8L946.7 343.6L945.5 335.1z" fill="#2e17ce"/>
<path d="M953.4 343.7L954.3 352.4L947.7 353.0L946.8 344.5z" fill="#2e17ce"/>
<path d="M954.4 353.3L955.0 362.0L948.4 362.4L947.8 353.9z" fill="#2e17ce"/>
<path d="M955.0 363.0L955.3 371.7L948.8 371.8L948.4 363.3z" fill="#2e17ce"/>
<path d="M955.4 372.6L955.4 381.4L948.8 381.3L948.8 372.7z" fill="#2e17ce"/>
<path d="M955.3 382.3L955.0 391.0L948.4 390.7L948.8 382.2z" fill="#2e17ce"/>
<path d="M955.0 392.0L954.4 400.7L947.8 400.1L948.4 391.6z" fill="#2e17ce"/>
<path d="M954.3 401.6L953.4 410.3L946.8 409.5L947.7 401.0z" fill="#2e17ce"/>
<path d="M953.3 411.2L952.0 419.9L945.5 418.9L946.7 410.4z" fill="#2e17ce"/>
<path d="M950.2 430.3L948.3 438.9L941.9 437.4L943.7 429.0z" fill="#2e17ce"/>
<path d="M948.1 439.8L946.0 448.3L939.6 446.5L941.7 438.2z" fill="#2e17ce"/>
<path d="M945.7 449.1L943.3 457.5L937.0 455.6L939.4 447.4z" fill="#2e17ce"/>
<path d="M943.0 458.4L940.3 466.7L934.1 464.6L936.7 456.5z" fill="#2e17ce"/>
<path d="M940.0 467.6L937.0 475.8L930.8 473.4L933.8 465.4z" fill="#2e17ce"/>
<path d="M936.6 476.7L933.3 484.8L927.2 482.2L930.5 474.3z" fill="#2e17ce"/>
<path d="M933.0 485.6L929.4 493.6L923.4 490.8L926.9 483.0z" fill="#4a35d8"/>
<path d="M929.0 494.4L925.1 502.3L919.2 499.3L923.0 491.6z" fill="#4a35d8"/>
<path d="M924.7 503.1L920.5 510.8L914.7 507.6L918.8 500.1z" fill="#2e17ce"/>
<path d="M920.1 511.6L915.6 519.2L910.0 515.7L914.3 508.4z" fill="#2e17ce"/>
<path d="M915.2 519.9L910.5 527.3L905.0 523.7L909.5 516.5z" fill="#4a35d8"/>
<path d="M910.0 528.1L905.0 535.3L899.6 531.5L904.5 524.5z" fill="#2e17ce"/>
<path d="M904.5 536.1L899.3 543.1L894.1 539.1L899.1 532.2z" fill="#2e17ce"/>
<path d="M559.6 114.9L567.6 111.4L570.2 117.4L562.3 120.9z" fill="#e83a1c"/>
<path d="M568.4 111.0L576.6 107.7L579.0 113.8L571.0 117.1z" fill="#e83a1c"/>
<path d="M577.4 107.4L585.7 104.3L587.9 110.5L579.8 113.5z" fill="#e83a1c"/>
<path d="M550.8 119.2L558.7 115.3L561.5 121.3L553.8 125.1z" fill="#b02a70"/>
<path d="M542.2 123.7L550.0 119.6L553.0 125.5L545.4 129.5z" fill="#7a2ab0"/>
<path d="M517.5 139.0L524.8 134.1L528.3 139.7L521.2 144.4z" fill="#8c8ca4"/>
<path d="M509.5 144.6L516.7 139.5L520.5 144.9L513.5 150.0z" fill="#747474"/>
<path d="M501.8 150.6L508.8 145.2L512.8 150.5L505.9 155.7z" fill="#6e6e6e"/>
<path d="M494.3 156.7L501.1 151.1L505.2 156.3L498.6 161.7z" fill="#6e6e6e"/>
<path d="M454.0 198.6L459.5 191.8L464.6 196.0L459.2 202.7z" fill="#8060d0"/>
<path d="M442.5 214.3L447.6 207.1L453.0 211.0L448.0 218.0z" fill="#6a50d8"/>
<path d="M418.7 256.5L422.5 248.6L428.4 251.5L424.7 259.3z" fill="#6030c0"/>
<path d="M425.9 258.8L429.7 250.9L435.6 253.9L431.9 261.6z" fill="#5a20b8"/>
<path d="M411.2 274.4L414.5 266.3L420.6 268.8L417.4 276.8z" fill="#5a48d8"/>
<path d="M404.9 292.8L407.6 284.4L413.9 286.6L411.2 294.7z" fill="#6a58e0"/>
<path d="M394.7 340.2L396.0 331.5L402.5 332.6L401.3 341.1z" fill="#7a68e0"/>
<path d="M392.9 359.6L393.6 350.8L400.2 351.4L399.5 360.0z" fill="#7030b0"/>
<path d="M403.2 420.1L402.0 411.4L408.6 410.6L409.7 419.1z" fill="#d02840"/>
<path d="M396.8 427.3L395.4 418.6L401.9 417.6L403.3 426.1z" fill="#7028b0"/>
<path d="M605.1 106.0L613.6 103.8L615.2 110.2L606.9 112.4z" fill="#5a4ad8"/>
<path d="M614.5 103.6L623.1 101.6L624.4 108.1L616.0 110.0z" fill="#5a4ad8"/>
<path d="M624.0 101.4L632.6 99.8L633.7 106.3L625.3 107.9z" fill="#5a4ad8"/>
<path d="M633.5 99.6L642.2 98.2L643.1 104.8L634.6 106.1z" fill="#5a4ad8"/>
<path d="M643.1 98.1L651.8 97.1L652.5 103.6L644.0 104.7z" fill="#5a4ad8"/>
<path d="M652.8 97.0L661.5 96.2L662.0 102.8L653.4 103.5z" fill="#5a4ad8"/>
<path d="M662.4 96.1L671.2 95.7L671.5 102.3L662.9 102.7z" fill="#5a4ad8"/>
<path d="M711.0 97.1L719.7 98.1L718.8 104.7L710.3 103.6z" fill="#5a2cc4"/>
<path d="M720.6 98.2L729.3 99.6L728.2 106.1L719.7 104.8z" fill="#7040c0"/>
<path d="M730.2 99.8L738.8 101.4L737.5 107.9L729.1 106.3z" fill="#6a38c0"/>
<path d="M730.2 92.1L738.8 93.8L737.5 100.2L729.1 98.7z" fill="#5058b0"/>
<path d="M739.7 93.9L748.3 95.9L746.8 102.3L738.4 100.4z" fill="#5a60b0"/>
<path d="M749.2 96.1L757.7 98.3L756.0 104.6L747.6 102.5z" fill="#78b070"/>
<path d="M748.9 111.4L757.3 113.7L755.5 120.1L747.2 117.8z" fill="#5a40d8"/>
<path d="M845.7 148.4L852.7 153.6L848.7 158.9L841.8 153.8z" fill="#6a58d8"/>
<path d="M853.4 154.2L860.3 159.7L856.1 164.8L849.4 159.4z" fill="#9080d8"/>
<path d="M875.6 173.2L881.8 179.4L877.1 184.0L871.0 178.0z" fill="#6a58d8"/>
<path d="M882.5 180.0L888.5 186.4L883.7 190.9L877.8 184.6z" fill="#6a58d8"/>
<path d="M895.6 194.3L901.2 201.1L896.0 205.3L890.6 198.6z" fill="#6028c0"/>
<path d="M928.6 242.3L932.7 250.1L926.8 253.1L922.8 245.5z" fill="#5a48d8"/>
<path d="M933.1 250.9L936.9 258.8L930.9 261.6L927.2 253.9z" fill="#6a58e0"/>
<path d="M941.2 268.6L944.4 276.8L938.3 279.1L935.1 271.1z" fill="#7060e0"/>
<path d="M955.9 314.8L957.8 323.4L951.3 324.7L949.5 316.3z" fill="#6a58e0"/>
<path d="M960.9 343.5L961.8 352.3L955.2 352.9L954.3 344.3z" fill="#5a40d0"/>
<path d="M955.0 363.0L955.3 371.7L948.8 371.8L948.4 363.3z" fill="#18a0c0"/>
<path d="M955.4 372.6L955.4 381.4L948.8 381.3L948.8 372.7z" fill="#18a0c0"/>
<path d="M955.3 382.3L955.0 391.0L948.4 390.7L948.8 382.2z" fill="#18a0c0"/>
<path d="M955.0 392.0L954.4 400.7L947.8 400.1L948.4 391.6z" fill="#18a0c0"/>
<path d="M954.3 401.6L953.4 410.3L946.8 409.5L947.7 401.0z" fill="#18a0c0"/>
<path d="M953.3 411.2L952.0 419.9L945.5 418.9L946.7 410.4z" fill="#4a58d0"/>
<path d="M962.5 392.0L961.9 400.8L955.3 400.3L955.9 391.7z" fill="#5a48d8"/>
<path d="M957.8 430.6L955.9 439.2L949.5 437.7L951.3 429.3z" fill="#5a48d8"/>
<path d="M953.4 449.5L951.0 458.0L944.7 456.1L947.0 447.8z" fill="#7060e0"/>
<path d="M947.7 468.1L944.8 476.4L938.6 474.1L941.5 466.0z" fill="#b0a8e8"/>
<path d="M932.7 503.9L928.6 511.7L922.8 508.5L926.8 500.9z" fill="#6a58e0"/>
<path d="M924.7 503.1L920.5 510.8L914.7 507.6L918.8 500.1z" fill="#9890e0"/>
<path d="M915.2 519.9L910.5 527.3L905.0 523.7L909.5 516.5z" fill="#7a68e0"/>
<path d="M910.0 528.1L905.0 535.3L899.6 531.5L904.5 524.5z" fill="#8070d8"/>
<path d="M851.3 591.9L844.4 597.3L840.5 592.0L847.2 586.8z" fill="#a4a4ac"/>
<path d="M843.6 597.8L836.5 602.9L832.8 597.4L839.7 592.5z" fill="#72727a"/>
<path d="M857.1 606.4L850.1 611.7L846.2 606.3L853.1 601.2z" fill="#6a58e0"/>
<path d="M841.3 617.7L833.9 622.5L830.4 616.9L837.7 612.2z" fill="#a02880"/>
<path d="M798.8 641.1L790.7 644.5L788.2 638.4L796.1 635.0z" fill="#7868e0"/>
<path d="M767.0 645.2L758.6 647.7L756.8 641.4L765.0 638.9z" fill="#a03088"/>
<path d="M762.4 654.4L753.9 656.8L752.2 650.4L760.5 648.1z" fill="#5a48d8"/>
<path d="M753.0 657.0L744.5 659.0L743.0 652.6L751.4 650.6z" fill="#5a48d8"/>
<path d="M666.4 665.6L657.6 665.0L658.1 658.4L666.7 659.0z" fill="#c8c0e0"/>
<path d="M700.4 657.9L691.6 658.3L691.3 651.7L699.9 651.3z" fill="#5a20c0"/>
<path d="M680.9 658.5L672.1 658.3L672.4 651.8L681.0 651.9z" fill="#7060e0"/>
<path d="M651.8 656.9L643.1 655.9L644.0 649.3L652.5 650.4z" fill="#4a38d8"/>
<path d="M642.2 655.8L633.5 654.4L634.6 647.9L643.1 649.2z" fill="#6a58e0"/>
<path d="M632.6 654.2L624.0 652.6L625.3 646.1L633.7 647.7z" fill="#9080e8"/>
<path d="M632.6 654.2L624.0 652.6L625.3 646.1L633.7 647.7z" fill="#8030b0"/>
<path d="M623.1 652.4L614.5 650.4L616.0 644.0L624.4 645.9z" fill="#5a20c0"/>
<path d="M608.9 656.8L600.4 654.4L602.3 648.1L610.6 650.4z" fill="#5a48d8"/>
<path d="M545.7 632.2L538.0 627.9L541.3 622.2L548.8 626.3z" fill="#7028a0"/>
<path d="M520.7 617.2L513.5 612.2L517.3 606.8L524.4 611.7z" fill="#6a58e0"/>
<path d="M494.4 587.4L487.9 581.5L492.4 576.7L498.8 582.5z" fill="#6a58e0"/>
<path d="M509.4 599.8L502.5 594.3L506.7 589.2L513.4 594.6z" fill="#e03028"/>
<path d="M473.6 566.9L467.8 560.4L472.8 556.1L478.5 562.5z" fill="#8030a0"/>
<path d="M455.1 544.4L450.0 537.3L455.4 533.5L460.4 540.5z" fill="#6a58e0"/>
<path d="M439.0 520.2L434.7 512.5L440.4 509.3L444.7 516.8z" fill="#6030b0"/>
<path d="M414.8 467.2L412.1 458.9L418.4 456.9L421.0 465.1z" fill="#6a58e0"/>
</svg>
<span class="t" style="left:866.0px;top:89.6px;font-size:11.2px;color:#00e41c;font-weight:700;transform:scaleX(1.0530)">КПД ~ фабричных данных: 3.69</span>
<div class="abs" style="left:314.2px;top:457.2px;width:11.6px;height:11.6px;box-sizing:border-box;border:1px solid #a8a8a8;border-radius:1.5px;background-color:#000"></div>
<span class="t" style="left:329.8px;top:457.9px;font-size:10.9px;color:#f6f6f6;transform:scaleX(0.9676)">Фон</span>
<div class="abs" style="left:314.2px;top:472.2px;width:11.6px;height:11.6px;box-sizing:border-box;border:1px solid rgba(255,255,255,0.3);border-radius:1.5px;background-color:#d6d6e2"></div>
<span class="t" style="left:329.8px;top:472.9px;font-size:10.9px;color:#f6f6f6;transform:scaleX(0.9924)">Свободно</span>
<div class="abs" style="left:314.2px;top:487.2px;width:11.6px;height:11.6px;box-sizing:border-box;border:1px solid rgba(255,255,255,0.3);border-radius:1.5px;background-color:#3019d2"></div>
<span class="t" style="left:329.8px;top:487.9px;font-size:10.9px;color:#f6f6f6;transform:scaleX(0.9948)">Объединен</span>
<div class="abs" style="left:314.2px;top:502.2px;width:11.6px;height:11.6px;box-sizing:border-box;border:1px solid rgba(255,255,255,0.3);border-radius:1.5px;background-color:#e23c1c"></div>
<span class="t" style="left:329.8px;top:502.9px;font-size:10.9px;color:#f6f6f6;transform:scaleX(1.0254)">Фрагментирован</span>
<div class="abs" style="left:314.2px;top:517.2px;width:11.6px;height:11.6px;box-sizing:border-box;border:1px solid rgba(255,255,255,0.3);border-radius:1.5px;background-color:#78b860"></div>
<span class="t" style="left:329.8px;top:517.9px;font-size:10.9px;color:#f6f6f6;transform:scaleX(1.0658)">Каталог</span>
<div class="abs" style="left:314.2px;top:532.2px;width:11.6px;height:11.6px;box-sizing:border-box;border:1px solid rgba(255,255,255,0.3);border-radius:1.5px;background-color:#787878"></div>
<span class="t" style="left:329.8px;top:532.9px;font-size:10.9px;color:#f6f6f6;transform:scaleX(1.0155)">Блокирован</span>
<div class="abs" style="left:314.2px;top:547.2px;width:11.6px;height:11.6px;box-sizing:border-box;border:1px solid rgba(255,255,255,0.3);border-radius:1.5px;background-color:#107880"></div>
<span class="t" style="left:329.8px;top:547.9px;font-size:10.9px;color:#f6f6f6;transform:scaleX(0.9924)">Подкачка</span>
<div class="abs" style="left:314.2px;top:562.2px;width:11.6px;height:11.6px;box-sizing:border-box;border:1px solid rgba(255,255,255,0.3);border-radius:1.5px;background-color:#1898c0"></div>
<span class="t" style="left:329.8px;top:562.9px;font-size:10.9px;color:#f6f6f6;transform:scaleX(1.0397)">Сжатый</span>
<div class="abs" style="left:314.2px;top:577.2px;width:11.6px;height:11.6px;box-sizing:border-box;border:1px solid rgba(255,255,255,0.3);border-radius:1.5px;background-color:#c8c860"></div>
<span class="t" style="left:329.8px;top:577.9px;font-size:10.9px;color:#f6f6f6;transform:scaleX(0.9822)">Резерв MFT</span>
<div class="abs" style="left:314.2px;top:592.2px;width:11.6px;height:11.6px;box-sizing:border-box;border:1px solid rgba(255,255,255,0.3);border-radius:1.5px;background-color:#808080"></div>
<span class="t" style="left:329.8px;top:592.9px;font-size:10.9px;color:#f6f6f6;transform:scaleX(1.0398)">Исключен</span>
<div class="abs" style="left:314.2px;top:607.2px;width:11.6px;height:11.6px;box-sizing:border-box;border:1px solid rgba(255,255,255,0.3);border-radius:1.5px;background-color:#108010"></div>
<span class="t" style="left:329.8px;top:607.9px;font-size:10.9px;color:#f6f6f6;transform:scaleX(1.0551)">Архивные</span>
<div class="abs" style="left:314.2px;top:622.2px;width:11.6px;height:11.6px;box-sizing:border-box;border:1px solid rgba(255,255,255,0.3);border-radius:1.5px;background-color:#a020f0"></div>
<span class="t" style="left:329.8px;top:622.9px;font-size:10.9px;color:#f6f6f6;transform:scaleX(1.0217)">Высокопроизв.</span>
<div class="abs" style="left:314.2px;top:637.2px;width:11.6px;height:11.6px;box-sizing:border-box;border:1px solid #a8a8a8;border-radius:1.5px;background-color:#000"></div>
<span class="t" style="left:329.8px;top:637.9px;font-size:10.9px;color:#f6f6f6;transform:scaleX(1.0082)">Разделитель</span>
<div class="abs" style="left:314.4px;top:657.2px;width:128.8px;height:15px;box-sizing:border-box;border:1px solid #fff;border-radius:2px;background:linear-gradient(#f8fafd 0,#eef1f8 50%,#dfe4f0 54%,#e8ecf5 100%)"></div>
<span class="t" style="left:317.5px;top:660.9px;font-size:10.9px;color:#0c0c2c;transform:scaleX(0.9922)">Сбросить по умолчанию</span>
<span class="t" style="left:964.0px;top:600.9px;font-size:10.9px;color:#f6f6f6;transform:scaleX(0.9808)">17.72 Мб на блок</span>
<span class="t" style="left:926.5px;top:618.9px;font-size:10.9px;color:#f6f6f6;transform:scaleX(1.0217)">4535 кластеров на блок</span>
<span class="t" style="left:900.5px;top:636.9px;font-size:10.9px;color:#f6f6f6;transform:scaleX(1.0089)">Дефрагментирован: Еще нет</span>
<div class="abs" style="left:923px;top:657.2px;width:130px;height:15px;box-sizing:border-box;border:1px solid #fff;border-radius:2px;background:linear-gradient(#f6f8fc 0,#eef2f8 50%,#dfe5f0 52%,#e8ecf4 100%)"></div>
<span class="t" style="left:939.0px;top:660.9px;font-size:10.9px;color:#0c0c2c;transform:scaleX(1.0069)">Сбросить позицию</span>
<div class="abs" style="left:466.3px;top:250px;width:393.4px;height:200px;box-sizing:border-box;background:#eeeeee;border:1px solid #69788d"></div>
<div class="abs" style="left:466.3px;top:250px;width:393.4px;height:26px;background:#69788d"></div>
<span class="t" style="left:471.0px;top:257.9px;font-size:10.9px;color:#fff;transform:scaleX(1.0751)">Тест скорости HDD</span>
<svg class="abs" style="left:838px;top:257px" width="12" height="12" viewBox="0 0 12 12"><path d="M1 1L11 11M11 1L1 11" stroke="#fff" stroke-width="1.2" fill="none"/></svg>
<span class="t" style="left:478.3px;top:300.9px;font-size:10.9px;color:#000;transform:scaleX(1.0045)">Тестирование диска: WDC WD5003AZEX-00K1GA0</span>
<div class="abs" style="left:478.5px;top:339px;width:369.2px;height:21px;box-sizing:border-box;border:1px solid #3a3a3a;border-radius:2px;background:linear-gradient(90deg,rgba(96,144,32,0) 0,rgba(96,144,32,0) 55%,rgba(150,210,40,0.55) 82%,rgba(230,250,170,0.9) 100%),linear-gradient(#c0d898 0,#a0c474 18%,#6e9e34 30%,#5c8c22 60%,#5a8a20 85%,#7ca83e 100%)"></div>
<span class="t" style="left:478.3px;top:373.9px;font-size:10.9px;color:#000;transform:scaleX(1.0223)">Тест завершен, итог:</span>
<span class="t" style="left:508.0px;top:395.9px;font-size:10.9px;color:#000;transform:scaleX(1.0430)">64 КБ ~ скорость:</span>
<span class="t" style="left:508.0px;top:417.9px;font-size:10.9px;color:#000;transform:scaleX(1.0276)">32 Мб ~ скорость:</span>
<span class="t" style="left:676.5px;top:395.8px;font-size:11.0px;color:#10b030;font-weight:700;transform:scaleX(1.1160)">9.5 Мб/сек</span>
<span class="t" style="left:669.5px;top:417.8px;font-size:11.0px;color:#10b030;font-weight:700;transform:scaleX(1.1137)">159.8 Мб/сек</span>
<div class="abs" style="left:773px;top:416px;width:75px;height:23px;box-sizing:border-box;border:1px solid #d6bc84;border-radius:3px;box-shadow:inset 0 0 0 1px #fff8e0;background:linear-gradient(#fffdf2 0,#ffecb8 46%,#ffc640 50%,#ffd058 75%,#ffe694 100%)"></div>
<div class="abs" style="left:776px;top:419px;width:69.5px;height:17px;box-sizing:border-box;border:1px dotted #10103a"></div>
<span class="t" style="left:801.9px;top:421.9px;font-size:12px;color:#0a0a28;transform:scaleX(0.9456)">OK</span>
<div class="abs" style="left:0px;top:677.8px;width:1059px;height:25.2px;background:linear-gradient(#2c2c30 0,#2c2c30 1px,#3c404a 1.2px,#3a3e48 7.8px,#333333 8.2px,#323232 100%)"></div>
<div class="abs" style="left:0px;top:701.7px;width:1059px;height:1.3px;background:#6a4c48"></div>
<div class="abs" style="left:0px;top:654px;width:1.1px;height:49px;background:#7a5c5a"></div>
<span class="t" style="left:3.5px;top:684.9px;font-size:10.9px;color:#8c9cb8;text-decoration:underline;transform:scaleX(1.0944)">www.disktrix.com</span>
<div class="abs" style="left:105px;top:681px;width:1px;height:19px;background:#161616;box-shadow:1px 0 0 #5a5a5a"></div>
<span class="t" style="left:115.1px;top:684.9px;font-size:10.9px;color:#f6f6f6;transform:scaleX(0.9951)">00:00:00</span>
<div class="abs" style="left:169px;top:681px;width:1px;height:19px;background:#161616;box-shadow:1px 0 0 #5a5a5a"></div>
<div class="abs" style="left:334px;top:681px;width:1px;height:19px;background:#161616;box-shadow:1px 0 0 #5a5a5a"></div>
<div class="abs" style="left:386.5px;top:681px;width:1px;height:19px;background:#161616;box-shadow:1px 0 0 #5a5a5a"></div>
<div class="abs" style="left:897px;top:678px;width:162px;height:25px;background:linear-gradient(#b4b4b4,#8a8a8a 50%,#6e6e6e);border-left:1px solid #d0d0d0;box-sizing:border-box"></div>
<div class="abs" style="left:929px;top:689px;width:86px;height:1px;background:#e8e8e8"></div>
<svg class="abs" style="left:905px;top:681px" width="18" height="18" viewBox="0 0 18 18"><circle cx="9" cy="9" r="7.6" fill="#d8d8d8" stroke="#f2f2f2" stroke-width="1.4"/><path d="M5 9h8" stroke="#606060" stroke-width="1.8"/></svg>
<svg class="abs" style="left:1021px;top:681px" width="18" height="18" viewBox="0 0 18 18"><circle cx="9" cy="9" r="7.6" fill="#d8d8d8" stroke="#f2f2f2" stroke-width="1.4"/><path d="M5 9h8M9 5v8" stroke="#606060" stroke-width="1.8"/></svg>
<svg class="abs" style="left:967px;top:682px" width="10" height="14" viewBox="0 0 10 14"><path d="M1 1h8v8L5 13L1 9z" fill="#e0e0e0" stroke="#707070" stroke-width="0.9"/><path d="M5 3.5v5" stroke="#888" stroke-width="1"/></svg>
<div class="abs" style="left:1053px;top:692px;width:2px;height:2px;background:#303030;box-shadow:-4px 4px 0 #303030,0 4px 0 #303030,-8px 8px 0 #303030,-4px 8px 0 #303030,0 8px 0 #303030"></div>
<div class="abs" style="left:1057.6px;top:0px;width:1.4px;height:703px;background:#15151f"></div>
</div>
</body></html>
